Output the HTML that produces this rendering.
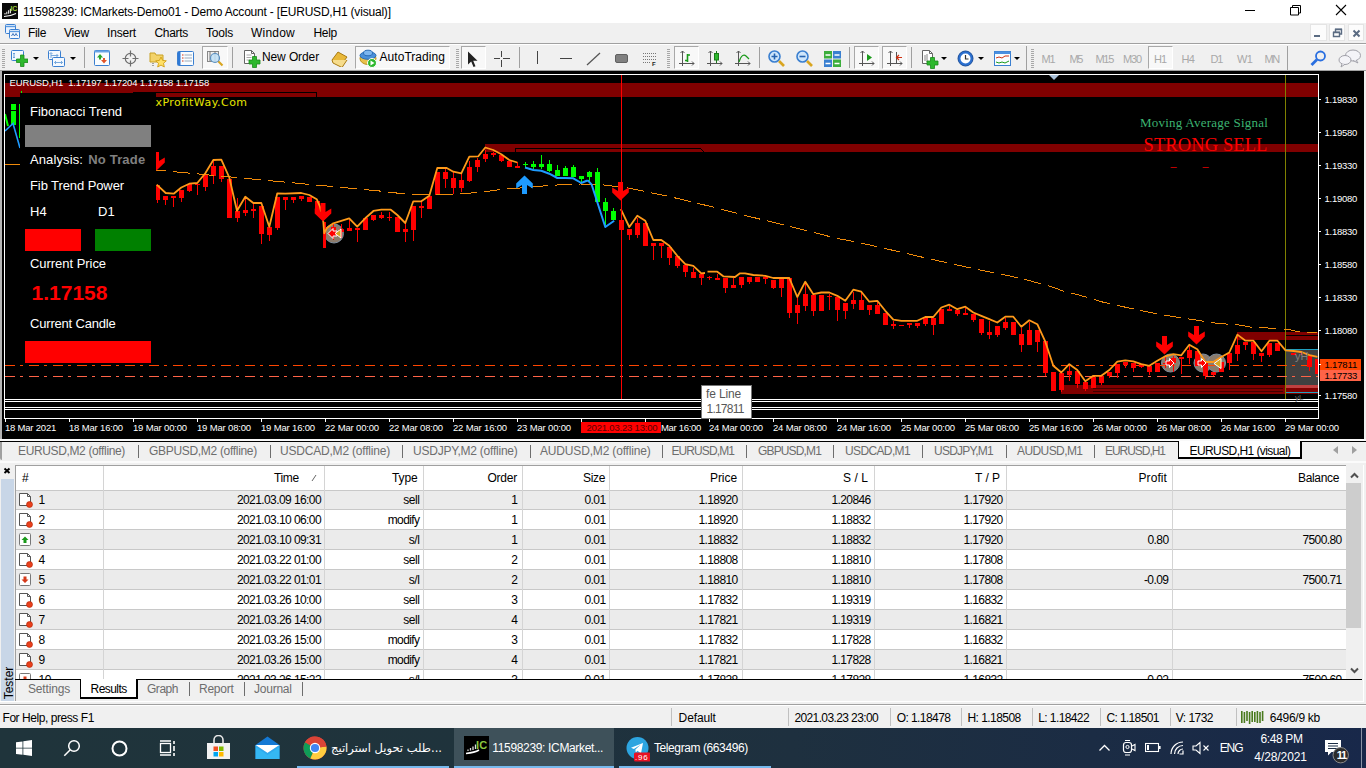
<!DOCTYPE html>
<html lang="en"><head><meta charset="utf-8"><title>11598239: ICMarkets-Demo01 - Demo Account - [EURUSD,H1 (visual)]</title>
<style>
html,body{margin:0;padding:0}
body{width:1366px;height:768px;overflow:hidden;position:relative;background:#f0f0f0;font-family:"Liberation Sans",sans-serif;font-size:12px;color:#000}
.t{position:absolute;white-space:pre;display:block}
.b{position:absolute;display:block}
svg{display:block}
</style></head><body>

<div class="b" style="left:0px;top:0px;width:1366px;height:23px;background:#fff;"></div>
<span class="t" style="left:23.0px;top:3.7px;font-size:12px;line-height:16px;color:#000;letter-spacing:-0.20px;">11598239: ICMarkets-Demo01 - Demo Account - [EURUSD,H1 (visual)]</span>
<div class="b" style="left:0px;top:23px;width:1366px;height:20px;background:#f0f0f0;"></div>
<div class="b" style="left:0px;top:43px;width:1366px;height:1px;background:#a0a0a0;"></div>
<div class="b" style="left:0px;top:44px;width:1366px;height:1px;background:#fff;"></div>
<span class="t" style="left:28.0px;top:24.8px;font-size:12px;line-height:16px;color:#000;letter-spacing:-0.33px;">File</span>
<span class="t" style="left:64.0px;top:24.8px;font-size:12px;line-height:16px;color:#000;letter-spacing:-0.20px;">View</span>
<span class="t" style="left:107.0px;top:24.8px;font-size:12px;line-height:16px;color:#000;letter-spacing:-0.17px;">Insert</span>
<span class="t" style="left:154.5px;top:24.8px;font-size:12px;line-height:16px;color:#000;letter-spacing:-0.31px;">Charts</span>
<span class="t" style="left:206.0px;top:24.8px;font-size:12px;line-height:16px;color:#000;letter-spacing:-0.20px;">Tools</span>
<span class="t" style="left:251.0px;top:24.8px;font-size:12px;line-height:16px;color:#000;letter-spacing:0.22px;">Window</span>
<span class="t" style="left:313.5px;top:24.8px;font-size:12px;line-height:16px;color:#000;letter-spacing:-0.30px;">Help</span>
<div class="b" style="left:0px;top:45px;width:1366px;height:25px;background:#f0f0f0;"></div>
<svg class="b" style="left:2px;top:3px" width="16" height="16" viewBox="0 0 16 16"><rect width="16" height="16" fill="#0a0a0a"/><path d="M2 13.500c4-0.300 8-1 12-3" stroke="#fff" stroke-width="1.200" fill="none"/><path d="M3 11.500v-1.500M4.800 11.200v-2.500M6.600 10.800v-3.500M8.400 10.300v-4.500" stroke="#e8e8e8" stroke-width="1.100"/></svg>
<span class="t" style="left:10.5px;top:4.4px;font-size:7px;line-height:9px;color:#9ccc3c;letter-spacing:-0.25px;font-weight:bold;">IC</span>
<svg class="b" style="left:1240px;top:0px" width="126" height="22" viewBox="0 0 126 22"><path d="M5 10.500h10" stroke="#000" stroke-width="1"/><path d="M50.500 7.500h8v7.500h-8zM52.500 7.500v-2h8v7.500h-2" stroke="#000" fill="none"/><path d="M96 5l10 10M106 5l-10 10" stroke="#000" stroke-width="1.100" fill="none"/></svg>
<div class="b" style="left:1310px;top:24px;width:16.5px;height:17px;background:#fcfcfc;border:1px solid #e4e4e4;box-sizing:border-box"></div>
<div class="b" style="left:1328.5px;top:24px;width:16.5px;height:17px;background:#fcfcfc;border:1px solid #e4e4e4;box-sizing:border-box"></div>
<div class="b" style="left:1347.5px;top:24px;width:16.5px;height:17px;background:#fcfcfc;border:1px solid #e4e4e4;box-sizing:border-box"></div>
<svg class="b" style="left:1310px;top:24px" width="56" height="18" viewBox="0 0 56 18"><path d="M4 12h6" stroke="#5a6b82" stroke-width="2"/><path d="M23.500 8.500h6v4h-6zM25.500 8v-2.500h6v4.500h-1.500" stroke="#5a6b82" stroke-width="1.400" fill="none"/><path d="M23 8.300h7M25 5.300h7" stroke="#5a6b82" stroke-width="1.600"/><path d="M43.500 6.500l6 6M49.500 6.500l-6 6" stroke="#5a6b82" stroke-width="2" fill="none"/></svg>
<svg class="b" style="left:5px;top:24px" width="16" height="16" viewBox="0 0 16 16"><rect x="0.500" y="0.500" width="10" height="9" rx="1" fill="#eaf3ff" stroke="#3a7fd0"/><path d="M0.500 2.500h10" stroke="#5b9be0" stroke-width="1.400"/><rect x="4.500" y="5.500" width="10" height="9" rx="1" fill="#f4f9ff" stroke="#3a7fd0"/><path d="M4.500 7.500h10" stroke="#5b9be0" stroke-width="1.400"/><path d="M6.500 12l1.500-2.500 1.500 2.500 1.500-2.500 1.500 2.500" stroke="#2a68b8" fill="none" stroke-width="0.900"/></svg>
<svg class="b" style="left:2px;top:49px" width="3" height="20" viewBox="0 0 3 20"><rect x="0" y="0" width="3" height="1" fill="#a8a8a8"/><rect x="0" y="2" width="3" height="1" fill="#a8a8a8"/><rect x="0" y="4" width="3" height="1" fill="#a8a8a8"/><rect x="0" y="6" width="3" height="1" fill="#a8a8a8"/><rect x="0" y="8" width="3" height="1" fill="#a8a8a8"/><rect x="0" y="10" width="3" height="1" fill="#a8a8a8"/><rect x="0" y="12" width="3" height="1" fill="#a8a8a8"/><rect x="0" y="14" width="3" height="1" fill="#a8a8a8"/><rect x="0" y="16" width="3" height="1" fill="#a8a8a8"/><rect x="0" y="18" width="3" height="1" fill="#a8a8a8"/></svg>
<svg class="b" style="left:11px;top:50px" width="17" height="18" viewBox="0 0 17 18"><rect x="0.500" y="0.500" width="12" height="10" rx="1" fill="#f4f9ff" stroke="#3a7fd0"/><path d="M3 3v5M2 4l1-1 1 1M2 7l1 1 1-1" stroke="#6a9fd8" fill="none"/><path d="M9.500 5h3.500v4h4v3.500h-4v4h-3.500v-4h-4v-3.500h4z" fill="#2db82d" stroke="#1a8a1a" stroke-width="0.800"/></svg>
<svg class="b" style="left:33px;top:57px" width="6" height="3" viewBox="0 0 6 3"><path d="M0 0h6l-3 3z" fill="#000"/></svg>
<svg class="b" style="left:48px;top:50px" width="18" height="18" viewBox="0 0 18 18"><rect x="0.500" y="0.500" width="12" height="9" rx="1" fill="#f4f9ff" stroke="#3a7fd0"/><rect x="4.500" y="7.500" width="12" height="9" rx="1" fill="#f4f9ff" stroke="#3a7fd0"/><path d="M3 5.500h7M6.500 12.500h8M3 3v5M4.500 4l-1.500-1.500-1.500 1.500M8.500 4l1.500 1.500-1.500 1.500M8 11l-1.500 1.500 1.500 1.500M13 11l1.500 1.500-1.500 1.500" stroke="#6a9fd8" fill="none" stroke-width="0.900"/></svg>
<svg class="b" style="left:70px;top:57px" width="6" height="3" viewBox="0 0 6 3"><path d="M0 0h6l-3 3z" fill="#000"/></svg>
<div class="b" style="left:84px;top:47px;width:1px;height:21px;background:#a0a0a0;"></div>
<svg class="b" style="left:94px;top:50px" width="17" height="17" viewBox="0 0 17 17"><rect x="0.500" y="0.500" width="15" height="15" rx="1" fill="#fafdff" stroke="#3a7fd0"/><rect x="0.500" y="0.500" width="15" height="2" fill="#6aa5e6"/><path d="M6 4l3 3.500h-2v2h-2v-2h-2z" fill="#2aa52a"/><path d="M10 13.500l3-3.500h-2v-2h-2v2h-2z" fill="#e2552a"/></svg>
<svg class="b" style="left:122px;top:50px" width="17" height="17" viewBox="0 0 17 17"><circle cx="8.500" cy="8.500" r="5.200" fill="none" stroke="#6e6e6e" stroke-width="1.200"/><path d="M8.500 0.500v6M8.500 10.500v6M0.500 8.500h6M10.500 8.500h6" stroke="#6e6e6e" stroke-width="1.200"/></svg>
<svg class="b" style="left:149px;top:50px" width="19" height="18" viewBox="0 0 19 18"><path d="M1 3h5l1 2h7v7h-13z" fill="#f3d36a" stroke="#c9a227"/><path d="M12 7l1.600 3.400 3.700 0.400-2.800 2.500 0.800 3.700-3.300-1.900-3.300 1.900 0.800-3.700-2.800-2.500 3.700-0.400z" fill="#ffe066" stroke="#d29f13" stroke-width="0.900"/><path d="M4 13v4" stroke="#555" stroke-dasharray="1 1"/></svg>
<svg class="b" style="left:177px;top:51px" width="18" height="16" viewBox="0 0 18 16"><rect x="0.500" y="0.500" width="16" height="14" rx="1" fill="#fafdff" stroke="#3a7fd0"/><rect x="1" y="1" width="2.500" height="13" fill="#2e79d6"/><path d="M7.500 4h7.500M7.500 7h7.500M7.500 10h7.500" stroke="#9ab"/><path d="M5 4h1.500M5 7h1.500M5 10h1.500" stroke="#d03010"/></svg>
<div class="b" style="left:202px;top:46px;width:26px;height:23px;background:#f8f8f8;border:1px solid #fff;border-top-color:#a8a8a8;border-left-color:#a8a8a8;box-sizing:border-box"></div>
<svg class="b" style="left:206px;top:50px" width="18" height="18" viewBox="0 0 18 18"><rect x="1.500" y="1.500" width="11" height="10" fill="#eee" stroke="#888"/><path d="M4 1v10M9 1v10" stroke="#777"/><circle cx="9" cy="8" r="4.500" fill="#bfe0f7" fill-opacity="0.850" stroke="#5a8fc0" stroke-width="1.200"/><path d="M12.500 11.500l4 4" stroke="#d9a520" stroke-width="2.200"/></svg>
<div class="b" style="left:232px;top:47px;width:1px;height:21px;background:#a0a0a0;"></div>
<svg class="b" style="left:243px;top:50px" width="18" height="18" viewBox="0 0 18 18"><path d="M1.500 0.500h7l3 3v10h-10z" fill="#fff" stroke="#666"/><path d="M8.500 0.500v3h3" fill="none" stroke="#666"/><path d="M3.500 5h5M3.500 7.500h5M3.500 10h3" stroke="#aaa"/><path d="M10 8h4v3.500h3.500v4h-3.500v3.500h-4v-3.500h-3.500v-4h3.500z" transform="translate(-0.5,-1.500)" fill="#2db82d" stroke="#1a8a1a" stroke-width="0.800"/></svg>
<span class="t" style="left:262.0px;top:49.1px;font-size:12px;line-height:16px;color:#000;letter-spacing:-0.11px;">New Order</span>
<svg class="b" style="left:331px;top:51px" width="17" height="16" viewBox="0 0 17 16"><path d="M1 9l6-8 9 5-6 8z" fill="#e8b83a" stroke="#a87a12"/><path d="M1 9l1 3 9 4.500 5-7.500" fill="#f6dc8c" stroke="#a87a12"/></svg>
<div class="b" style="left:355px;top:46px;width:95px;height:23px;background:#f8f8f8;border:1px solid #fff;border-top-color:#a8a8a8;border-left-color:#a8a8a8;box-sizing:border-box"></div>
<svg class="b" style="left:359px;top:49px" width="19" height="19" viewBox="0 0 19 19"><ellipse cx="9" cy="9.500" rx="8" ry="6" fill="#e9c24b" stroke="#b8901c"/><ellipse cx="9" cy="6.500" rx="8" ry="3.800" fill="#4a90d9" stroke="#2b6cb5"/><ellipse cx="9" cy="4" rx="4.500" ry="2.800" fill="#7db6ee" stroke="#2b6cb5"/><circle cx="13" cy="14" r="4.500" fill="#2db82d" stroke="#fff"/><path d="M11.500 11.500v5l4-2.500z" fill="#fff"/></svg>
<span class="t" style="left:379.5px;top:49.1px;font-size:12px;line-height:16px;color:#000;letter-spacing:0.05px;">AutoTrading</span>
<svg class="b" style="left:456px;top:49px" width="3" height="20" viewBox="0 0 3 20"><rect x="0" y="0" width="3" height="1" fill="#a8a8a8"/><rect x="0" y="2" width="3" height="1" fill="#a8a8a8"/><rect x="0" y="4" width="3" height="1" fill="#a8a8a8"/><rect x="0" y="6" width="3" height="1" fill="#a8a8a8"/><rect x="0" y="8" width="3" height="1" fill="#a8a8a8"/><rect x="0" y="10" width="3" height="1" fill="#a8a8a8"/><rect x="0" y="12" width="3" height="1" fill="#a8a8a8"/><rect x="0" y="14" width="3" height="1" fill="#a8a8a8"/><rect x="0" y="16" width="3" height="1" fill="#a8a8a8"/><rect x="0" y="18" width="3" height="1" fill="#a8a8a8"/></svg>
<div class="b" style="left:461px;top:46px;width:25px;height:23px;background:#f8f8f8;border:1px solid #fff;border-top-color:#a8a8a8;border-left-color:#a8a8a8;box-sizing:border-box"></div>
<svg class="b" style="left:467px;top:51px" width="12" height="17" viewBox="0 0 12 17"><path d="M1 0.500v13l3.200-3 2.300 5.500 2-0.800-2.300-5.400h4.300z" fill="#222"/></svg>
<svg class="b" style="left:494px;top:51px" width="16" height="16" viewBox="0 0 16 16"><path d="M7.500 0v16M0 7.500h16" stroke="#444" stroke-width="1"/><rect x="6" y="6" width="3" height="3" fill="#f0f0f0"/></svg>
<div class="b" style="left:519px;top:47px;width:1px;height:21px;background:#a0a0a0;"></div>
<div class="b" style="left:537px;top:51px;width:1px;height:13px;background:#444;"></div>
<div class="b" style="left:560px;top:58px;width:12px;height:1px;background:#444;"></div>
<svg class="b" style="left:586px;top:52px" width="15" height="14" viewBox="0 0 15 14"><path d="M1 13L14 1" stroke="#555" stroke-width="1.200"/></svg>
<div class="b" style="left:615px;top:54px;width:13px;height:9px;background:#808080;border-radius:2px;border:1px solid #606060;box-sizing:border-box"></div>
<svg class="b" style="left:642px;top:51px" width="16" height="16" viewBox="0 0 16 16"><path d="M1 2.500h13M1 5.500h13M1 8.500h13M1 11.500h8" stroke="#777" stroke-dasharray="1 1"/></svg>
<span class="t" style="left:652.0px;top:59.9px;font-size:6px;line-height:8px;color:#222;font-weight:bold;">F</span>
<svg class="b" style="left:667px;top:49px" width="3" height="20" viewBox="0 0 3 20"><rect x="0" y="0" width="3" height="1" fill="#a8a8a8"/><rect x="0" y="2" width="3" height="1" fill="#a8a8a8"/><rect x="0" y="4" width="3" height="1" fill="#a8a8a8"/><rect x="0" y="6" width="3" height="1" fill="#a8a8a8"/><rect x="0" y="8" width="3" height="1" fill="#a8a8a8"/><rect x="0" y="10" width="3" height="1" fill="#a8a8a8"/><rect x="0" y="12" width="3" height="1" fill="#a8a8a8"/><rect x="0" y="14" width="3" height="1" fill="#a8a8a8"/><rect x="0" y="16" width="3" height="1" fill="#a8a8a8"/><rect x="0" y="18" width="3" height="1" fill="#a8a8a8"/></svg>
<div class="b" style="left:674px;top:46px;width:25px;height:23px;background:#f8f8f8;border:1px solid #fff;border-top-color:#a8a8a8;border-left-color:#a8a8a8;box-sizing:border-box"></div>
<svg class="b" style="left:678px;top:50px" width="17" height="17" viewBox="0 0 17 17"><path d="M4.500 1v15M1 13.500h15M2.500 3l2-2 2 2M14 11.500l2 2-2 2" stroke="#555" fill="none"/><path d="M9.500 4v8M9.500 5h2.500M7 10.500h2.500" stroke="#1a9a1a" stroke-width="1.600" fill="none"/></svg>
<svg class="b" style="left:706px;top:50px" width="17" height="17" viewBox="0 0 17 17"><path d="M4.500 1v15M1 13.500h15M2.500 3l2-2 2 2M14 11.500l2 2-2 2" stroke="#555" fill="none"/><path d="M10.500 1v12" stroke="#1a7a1a"/><rect x="8.500" y="3.500" width="4" height="6.500" fill="#2db82d" stroke="#1a7a1a"/></svg>
<svg class="b" style="left:734px;top:50px" width="17" height="17" viewBox="0 0 17 17"><path d="M4.500 1v15M1 13.500h15M2.500 3l2-2 2 2M14 11.500l2 2-2 2" stroke="#555" fill="none"/><path d="M5 12c2-7 5-8 7-6l3 3" stroke="#1a9a1a" fill="none" stroke-width="1.200"/></svg>
<div class="b" style="left:759px;top:47px;width:1px;height:21px;background:#a0a0a0;"></div>
<svg class="b" style="left:768px;top:50px" width="17" height="18" viewBox="0 0 17 18"><circle cx="6.500" cy="6.500" r="5.500" fill="#cfe6fb" stroke="#3a7fd0" stroke-width="1.600"/><path d="M3.500 6.500h6M6.500 3.500v6" stroke="#2563b0" stroke-width="1.600"/><path d="M11 11l5 5" stroke="#d9a520" stroke-width="2.600"/></svg>
<svg class="b" style="left:796px;top:50px" width="17" height="18" viewBox="0 0 17 18"><circle cx="6.500" cy="6.500" r="5.500" fill="#cfe6fb" stroke="#3a7fd0" stroke-width="1.600"/><path d="M3.500 6.500h6" stroke="#2563b0" stroke-width="1.600"/><path d="M11 11l5 5" stroke="#d9a520" stroke-width="2.600"/></svg>
<svg class="b" style="left:824px;top:51px" width="17" height="16" viewBox="0 0 17 16"><rect x="0" y="0" width="8" height="7.500" fill="#3cae3c"/><rect x="9" y="0" width="8" height="7.500" fill="#3a7fd0"/><rect x="0" y="8.500" width="8" height="7.500" fill="#3a7fd0"/><rect x="9" y="8.500" width="8" height="7.500" fill="#3cae3c"/><path d="M1.500 4h5M10.500 4h5M1.500 12.500h5M10.500 12.500h5" stroke="#fff" stroke-width="1.600"/></svg>
<div class="b" style="left:849px;top:47px;width:1px;height:21px;background:#a0a0a0;"></div>
<div class="b" style="left:854px;top:46px;width:25px;height:23px;background:#f8f8f8;border:1px solid #fff;border-top-color:#a8a8a8;border-left-color:#a8a8a8;box-sizing:border-box"></div>
<svg class="b" style="left:858px;top:50px" width="17" height="17" viewBox="0 0 17 17"><path d="M4.500 1v15M1 13.500h15M2.500 3l2-2 2 2M14 11.500l2 2-2 2" stroke="#555" fill="none"/><path d="M9 4v7l5-3.500z" fill="#1a9a1a"/></svg>
<div class="b" style="left:882px;top:46px;width:25px;height:23px;background:#f8f8f8;border:1px solid #fff;border-top-color:#a8a8a8;border-left-color:#a8a8a8;box-sizing:border-box"></div>
<svg class="b" style="left:886px;top:50px" width="17" height="17" viewBox="0 0 17 17"><path d="M4.500 1v15M1 13.500h15M2.500 3l2-2 2 2M14 11.500l2 2-2 2" stroke="#555" fill="none"/><path d="M10.500 2v11" stroke="#555"/><path d="M16 7.500h-5M13 5l-2.500 2.500 2.500 2.500" stroke="#d03010" fill="none" stroke-width="1.200"/></svg>
<div class="b" style="left:911px;top:47px;width:1px;height:21px;background:#a0a0a0;"></div>
<svg class="b" style="left:921px;top:50px" width="18" height="19" viewBox="0 0 18 19"><path d="M1.500 0.500h7l3 3v10h-10z" fill="#fff" stroke="#666"/><path d="M8.500 0.500v3h3" fill="none" stroke="#666"/><path d="M4 5v6M6 4v8" stroke="#888"/><path d="M10 8h4v3.500h3.500v4h-3.500v3.500h-4v-3.500h-3.500v-4h3.500z" transform="translate(-0.5,-0.500)" fill="#2db82d" stroke="#1a8a1a" stroke-width="0.800"/></svg>
<svg class="b" style="left:941px;top:57px" width="6" height="3" viewBox="0 0 6 3"><path d="M0 0h6l-3 3z" fill="#000"/></svg>
<svg class="b" style="left:957px;top:50px" width="17" height="17" viewBox="0 0 17 17"><circle cx="8.500" cy="8.500" r="7.500" fill="#2a6fd0" stroke="#1b4e9a"/><circle cx="8.500" cy="8.500" r="5" fill="#fff"/><path d="M8.500 5v4h3" stroke="#333" fill="none" stroke-width="1.200"/></svg>
<svg class="b" style="left:978px;top:57px" width="6" height="3" viewBox="0 0 6 3"><path d="M0 0h6l-3 3z" fill="#000"/></svg>
<svg class="b" style="left:994px;top:51px" width="17" height="15" viewBox="0 0 17 15"><rect x="0.500" y="0.500" width="16" height="14" fill="#fafdff" stroke="#3a7fd0"/><rect x="0.500" y="0.500" width="16" height="2.500" fill="#4a8fe0"/><path d="M2 7l3-1 3 1 3-2 4 0" stroke="#d03010" fill="none"/><path d="M2 11l3 1 3-1 3 1 4-2" stroke="#1a9a1a" fill="none"/></svg>
<svg class="b" style="left:1014px;top:57px" width="6" height="3" viewBox="0 0 6 3"><path d="M0 0h6l-3 3z" fill="#000"/></svg>
<svg class="b" style="left:1031px;top:49px" width="3" height="20" viewBox="0 0 3 20"><rect x="0" y="0" width="3" height="1" fill="#a8a8a8"/><rect x="0" y="2" width="3" height="1" fill="#a8a8a8"/><rect x="0" y="4" width="3" height="1" fill="#a8a8a8"/><rect x="0" y="6" width="3" height="1" fill="#a8a8a8"/><rect x="0" y="8" width="3" height="1" fill="#a8a8a8"/><rect x="0" y="10" width="3" height="1" fill="#a8a8a8"/><rect x="0" y="12" width="3" height="1" fill="#a8a8a8"/><rect x="0" y="14" width="3" height="1" fill="#a8a8a8"/><rect x="0" y="16" width="3" height="1" fill="#a8a8a8"/><rect x="0" y="18" width="3" height="1" fill="#a8a8a8"/></svg>
<span class="t" style="left:1041.5px;top:51.5px;font-size:11px;line-height:14px;color:#a8a8a8;letter-spacing:-1.14px;">M1</span>
<span class="t" style="left:1069.5px;top:51.5px;font-size:11px;line-height:14px;color:#a8a8a8;letter-spacing:-1.39px;">M5</span>
<span class="t" style="left:1095.5px;top:51.5px;font-size:11px;line-height:14px;color:#a8a8a8;letter-spacing:-1.30px;">M15</span>
<span class="t" style="left:1123.0px;top:51.5px;font-size:11px;line-height:14px;color:#a8a8a8;letter-spacing:-1.13px;">M30</span>
<span class="t" style="left:1181.5px;top:51.5px;font-size:11px;line-height:14px;color:#a8a8a8;letter-spacing:-0.78px;">H4</span>
<span class="t" style="left:1210.5px;top:51.5px;font-size:11px;line-height:14px;color:#a8a8a8;letter-spacing:-1.28px;">D1</span>
<span class="t" style="left:1237.0px;top:51.5px;font-size:11px;line-height:14px;color:#a8a8a8;letter-spacing:-0.75px;">W1</span>
<span class="t" style="left:1264.5px;top:51.5px;font-size:11px;line-height:14px;color:#a8a8a8;letter-spacing:-1.30px;">MN</span>
<div class="b" style="left:1148px;top:46px;width:25px;height:23px;background:#f8f8f8;border:1px solid #fff;border-top-color:#a8a8a8;border-left-color:#a8a8a8;box-sizing:border-box"></div>
<span class="t" style="left:1154.0px;top:51.5px;font-size:11px;line-height:14px;color:#a8a8a8;letter-spacing:-1.03px;">H1</span>
<div class="b" style="left:1287px;top:46px;width:1px;height:24px;background:#a0a0a0;"></div>
<div class="b" style="left:1026px;top:46px;width:1px;height:24px;background:#a0a0a0;"></div>
<svg class="b" style="left:1310px;top:50px" width="17" height="17" viewBox="0 0 17 17"><circle cx="10.500" cy="6" r="4.500" fill="none" stroke="#2a6fe0" stroke-width="1.800"/><path d="M7 9.500l-5.500 5.500" stroke="#2a6fe0" stroke-width="2.800"/></svg>
<svg class="b" style="left:1338px;top:49px" width="24" height="19" viewBox="0 0 24 19"><ellipse cx="15" cy="6.500" rx="7.500" ry="5.500" fill="#f4f4f8" stroke="#a0a0a8"/><path d="M18 11l2 3-5-2.500" fill="#f4f4f8" stroke="#a0a0a8"/><ellipse cx="7" cy="11" rx="6" ry="4.500" fill="#f4f4f8" stroke="#a0a0a8"/><path d="M4 15l-1 3 4-2.800" fill="#f4f4f8" stroke="#a0a0a8"/></svg>
<svg class="chart" width="1366" height="768" viewBox="0 0 1366 768" style="position:absolute;left:0;top:0">
<rect x="0" y="70" width="1366" height="369" fill="#f0f0f0"/>
<rect x="0" y="70" width="1366" height="1" fill="#a0a0a0"/>
<rect x="2" y="71" width="1362" height="368" fill="#000"/>
<rect x="0" y="71" width="2" height="368" fill="#b4b4b4"/>
<g shape-rendering="crispEdges">
<rect x="5" y="83" width="1313" height="14" fill="#800000"/>
<path d="M132.5 92.5H316.5V96.5" fill="none" stroke="#000" stroke-width="1"/>
<rect x="485" y="144" width="833" height="8" fill="#800000"/>
<path d="M515.5 152V148.500H700.500L704 152" fill="none" stroke="#000" stroke-width="1"/>
<rect x="1237" y="332" width="81" height="8" fill="#800000"/>
<rect x="1285" y="335" width="33" height="1" fill="#000"/>
<rect x="1061" y="385" width="257" height="9" fill="#800000"/>
<rect x="1093" y="388" width="190" height="1" fill="#400000"/>
<rect x="1093" y="391" width="190" height="1" fill="#400000"/>
<rect x="1286" y="350" width="32" height="35" fill="#404040"/>
<rect x="1286" y="385" width="32" height="3" fill="#c04040"/>
<rect x="1286" y="349" width="32" height="1" fill="#20a0c0"/>
<rect x="1286" y="392" width="32" height="1" fill="#20a0c0"/>
<rect x="1285" y="75" width="1" height="324" fill="#808000"/>
</g>
<circle cx="1170.5" cy="363" r="9" fill="#8c7b6b" stroke="#7f8fa0" stroke-width="1"/>
<circle cx="1203" cy="363" r="9" fill="#8c7b6b" stroke="#7f8fa0" stroke-width="1"/>
<circle cx="1216.5" cy="363" r="9" fill="#8c7b6b" stroke="#7f8fa0" stroke-width="1"/>
<circle cx="334" cy="233.5" r="9.5" fill="#8c7b6b" stroke="#7f8fa0" stroke-width="1"/>
<g shape-rendering="crispEdges">
<line x1="5" y1="365.5" x2="1318" y2="365.5" stroke="#ff4500" stroke-width="1" stroke-dasharray="10 5 3 6"/>
<line x1="5" y1="376.5" x2="1318" y2="376.5" stroke="#ff6347" stroke-width="1" stroke-dasharray="10 5 3 6"/>
<rect x="157" y="185" width="1" height="18" fill="#ff0000"/>
<rect x="155" y="185" width="5" height="15" fill="#ff0000"/>
<rect x="165" y="196" width="1" height="9" fill="#ff0000"/>
<rect x="163" y="196" width="5" height="4" fill="#ff0000"/>
<rect x="173" y="196" width="1" height="11" fill="#ff0000"/>
<rect x="171" y="196" width="5" height="2" fill="#ff0000"/>
<rect x="181" y="190" width="1" height="12" fill="#ff0000"/>
<rect x="179" y="190" width="5" height="8" fill="#ff0000"/>
<rect x="189" y="184" width="1" height="8" fill="#ff0000"/>
<rect x="187" y="184" width="5" height="7" fill="#ff0000"/>
<rect x="197" y="184" width="1" height="11" fill="#ff0000"/>
<rect x="195" y="184" width="5" height="1" fill="#ff0000"/>
<rect x="205" y="175" width="1" height="16" fill="#ff0000"/>
<rect x="203" y="175" width="5" height="12" fill="#ff0000"/>
<rect x="213" y="161" width="1" height="23" fill="#ff0000"/>
<rect x="211" y="166" width="5" height="10" fill="#ff0000"/>
<rect x="221" y="166" width="1" height="16" fill="#ff0000"/>
<rect x="219" y="166" width="5" height="13" fill="#ff0000"/>
<rect x="229" y="179" width="1" height="39" fill="#ff0000"/>
<rect x="227" y="179" width="5" height="39" fill="#ff0000"/>
<rect x="237" y="198" width="1" height="24" fill="#ff0000"/>
<rect x="235" y="211" width="5" height="7" fill="#ff0000"/>
<rect x="245" y="198" width="1" height="18" fill="#ff0000"/>
<rect x="243" y="210" width="5" height="3" fill="#ff0000"/>
<rect x="253" y="203" width="1" height="15" fill="#ff0000"/>
<rect x="251" y="209" width="5" height="2" fill="#ff0000"/>
<rect x="261" y="206" width="1" height="38" fill="#ff0000"/>
<rect x="259" y="206" width="5" height="28" fill="#ff0000"/>
<rect x="269" y="227" width="1" height="14" fill="#ff0000"/>
<rect x="267" y="227" width="5" height="8" fill="#ff0000"/>
<rect x="277" y="197" width="1" height="33" fill="#ff0000"/>
<rect x="275" y="197" width="5" height="31" fill="#ff0000"/>
<rect x="285" y="197" width="1" height="13" fill="#ff0000"/>
<rect x="283" y="197" width="5" height="3" fill="#ff0000"/>
<rect x="293" y="197" width="1" height="6" fill="#ff0000"/>
<rect x="291" y="197" width="5" height="3" fill="#ff0000"/>
<rect x="301" y="196" width="1" height="5" fill="#ff0000"/>
<rect x="299" y="196" width="5" height="3" fill="#ff0000"/>
<rect x="309" y="197" width="1" height="5" fill="#ff0000"/>
<rect x="307" y="197" width="5" height="5" fill="#ff0000"/>
<rect x="317" y="201" width="1" height="12" fill="#ff0000"/>
<rect x="315" y="201" width="5" height="12" fill="#ff0000"/>
<rect x="325" y="222" width="1" height="26" fill="#ff0000"/>
<rect x="323" y="222" width="3" height="26" fill="#ff0000"/>
<rect x="333" y="224" width="1" height="16" fill="#ff0000"/>
<rect x="331" y="227" width="5" height="6" fill="#ff0000"/>
<rect x="341" y="224" width="1" height="14" fill="#ff0000"/>
<rect x="339" y="229" width="5" height="3" fill="#ff0000"/>
<rect x="349" y="220" width="1" height="11" fill="#ff0000"/>
<rect x="347" y="228" width="5" height="3" fill="#ff0000"/>
<rect x="357" y="228" width="1" height="14" fill="#ff0000"/>
<rect x="355" y="228" width="5" height="2" fill="#ff0000"/>
<rect x="365" y="218" width="1" height="12" fill="#ff0000"/>
<rect x="363" y="218" width="5" height="12" fill="#ff0000"/>
<rect x="373" y="215" width="1" height="6" fill="#ff0000"/>
<rect x="371" y="215" width="5" height="5" fill="#ff0000"/>
<rect x="381" y="212" width="1" height="7" fill="#ff0000"/>
<rect x="379" y="215" width="5" height="3" fill="#ff0000"/>
<rect x="389" y="212" width="1" height="9" fill="#ff0000"/>
<rect x="387" y="217" width="5" height="1" fill="#ff0000"/>
<rect x="397" y="217" width="1" height="15" fill="#ff0000"/>
<rect x="395" y="217" width="5" height="15" fill="#ff0000"/>
<rect x="405" y="223" width="1" height="19" fill="#ff0000"/>
<rect x="403" y="229" width="5" height="3" fill="#ff0000"/>
<rect x="413" y="206" width="1" height="35" fill="#ff0000"/>
<rect x="411" y="206" width="5" height="24" fill="#ff0000"/>
<rect x="421" y="202" width="1" height="16" fill="#ff0000"/>
<rect x="419" y="206" width="5" height="2" fill="#ff0000"/>
<rect x="429" y="196" width="1" height="13" fill="#ff0000"/>
<rect x="427" y="196" width="5" height="13" fill="#ff0000"/>
<rect x="437" y="172" width="1" height="23" fill="#ff0000"/>
<rect x="435" y="172" width="5" height="23" fill="#ff0000"/>
<rect x="445" y="169" width="1" height="19" fill="#ff0000"/>
<rect x="443" y="172" width="5" height="7" fill="#ff0000"/>
<rect x="453" y="172" width="1" height="22" fill="#ff0000"/>
<rect x="451" y="178" width="5" height="10" fill="#ff0000"/>
<rect x="461" y="174" width="1" height="18" fill="#ff0000"/>
<rect x="459" y="180" width="5" height="8" fill="#ff0000"/>
<rect x="469" y="161" width="1" height="21" fill="#ff0000"/>
<rect x="467" y="167" width="5" height="14" fill="#ff0000"/>
<rect x="477" y="158" width="1" height="14" fill="#ff0000"/>
<rect x="475" y="160" width="5" height="7" fill="#ff0000"/>
<rect x="485" y="150" width="1" height="12" fill="#ff0000"/>
<rect x="483" y="154" width="5" height="5" fill="#ff0000"/>
<rect x="493" y="152" width="1" height="5" fill="#ff0000"/>
<rect x="491" y="153" width="5" height="2" fill="#ff0000"/>
<rect x="501" y="155" width="1" height="7" fill="#ff0000"/>
<rect x="499" y="155" width="5" height="6" fill="#ff0000"/>
<rect x="509" y="161" width="1" height="6" fill="#ff0000"/>
<rect x="507" y="161" width="5" height="6" fill="#ff0000"/>
<rect x="517" y="162" width="1" height="6" fill="#ff0000"/>
<rect x="515" y="166" width="5" height="2" fill="#ff0000"/>
<rect x="525" y="162" width="1" height="6" fill="#00ff00"/>
<rect x="523" y="164" width="5" height="1" fill="#00ff00"/>
<rect x="533" y="161" width="1" height="8" fill="#00ff00"/>
<rect x="531" y="164" width="5" height="3" fill="#00ff00"/>
<rect x="541" y="155" width="1" height="14" fill="#00ff00"/>
<rect x="539" y="164" width="5" height="3" fill="#00ff00"/>
<rect x="549" y="160" width="1" height="12" fill="#00ff00"/>
<rect x="547" y="164" width="5" height="7" fill="#00ff00"/>
<rect x="557" y="165" width="1" height="11" fill="#00ff00"/>
<rect x="555" y="170" width="5" height="6" fill="#00ff00"/>
<rect x="565" y="166" width="1" height="10" fill="#00ff00"/>
<rect x="563" y="168" width="5" height="8" fill="#00ff00"/>
<rect x="573" y="165" width="1" height="12" fill="#00ff00"/>
<rect x="571" y="167" width="5" height="10" fill="#00ff00"/>
<rect x="581" y="176" width="1" height="6" fill="#00ff00"/>
<rect x="579" y="176" width="5" height="3" fill="#00ff00"/>
<rect x="589" y="171" width="1" height="10" fill="#00ff00"/>
<rect x="587" y="172" width="5" height="5" fill="#00ff00"/>
<rect x="597" y="168" width="1" height="34" fill="#00ff00"/>
<rect x="595" y="172" width="5" height="30" fill="#00ff00"/>
<rect x="605" y="198" width="1" height="27" fill="#00ff00"/>
<rect x="603" y="202" width="5" height="9" fill="#00ff00"/>
<rect x="613" y="208" width="1" height="12" fill="#00ff00"/>
<rect x="611" y="211" width="5" height="9" fill="#00ff00"/>
<rect x="621" y="220" width="1" height="10" fill="#ff0000"/>
<rect x="619" y="220" width="5" height="10" fill="#ff0000"/>
<rect x="629" y="229" width="1" height="11" fill="#ff0000"/>
<rect x="627" y="229" width="5" height="6" fill="#ff0000"/>
<rect x="637" y="218" width="1" height="20" fill="#ff0000"/>
<rect x="635" y="223" width="5" height="12" fill="#ff0000"/>
<rect x="645" y="223" width="1" height="23" fill="#ff0000"/>
<rect x="643" y="223" width="5" height="23" fill="#ff0000"/>
<rect x="653" y="243" width="1" height="17" fill="#ff0000"/>
<rect x="651" y="243" width="5" height="3" fill="#ff0000"/>
<rect x="661" y="243" width="1" height="15" fill="#ff0000"/>
<rect x="659" y="243" width="5" height="3" fill="#ff0000"/>
<rect x="669" y="247" width="1" height="18" fill="#ff0000"/>
<rect x="667" y="247" width="5" height="11" fill="#ff0000"/>
<rect x="677" y="256" width="1" height="12" fill="#ff0000"/>
<rect x="675" y="256" width="5" height="10" fill="#ff0000"/>
<rect x="685" y="265" width="1" height="12" fill="#ff0000"/>
<rect x="683" y="265" width="5" height="7" fill="#ff0000"/>
<rect x="693" y="268" width="1" height="10" fill="#ff0000"/>
<rect x="691" y="272" width="5" height="6" fill="#ff0000"/>
<rect x="701" y="274" width="1" height="11" fill="#ff0000"/>
<rect x="699" y="274" width="5" height="4" fill="#ff0000"/>
<rect x="709" y="276" width="1" height="4" fill="#ff0000"/>
<rect x="707" y="277" width="5" height="1" fill="#ff0000"/>
<rect x="717" y="274" width="1" height="6" fill="#ff0000"/>
<rect x="715" y="278" width="5" height="2" fill="#ff0000"/>
<rect x="725" y="278" width="1" height="15" fill="#ff0000"/>
<rect x="723" y="278" width="5" height="10" fill="#ff0000"/>
<rect x="733" y="278" width="1" height="10" fill="#ff0000"/>
<rect x="731" y="285" width="5" height="3" fill="#ff0000"/>
<rect x="741" y="277" width="1" height="11" fill="#ff0000"/>
<rect x="739" y="277" width="5" height="8" fill="#ff0000"/>
<rect x="749" y="277" width="1" height="7" fill="#ff0000"/>
<rect x="747" y="277" width="5" height="5" fill="#ff0000"/>
<rect x="757" y="277" width="1" height="5" fill="#ff0000"/>
<rect x="755" y="277" width="5" height="5" fill="#ff0000"/>
<rect x="765" y="277" width="1" height="7" fill="#ff0000"/>
<rect x="763" y="277" width="5" height="2" fill="#ff0000"/>
<rect x="773" y="280" width="1" height="9" fill="#ff0000"/>
<rect x="771" y="280" width="5" height="8" fill="#ff0000"/>
<rect x="781" y="279" width="1" height="18" fill="#ff0000"/>
<rect x="779" y="279" width="5" height="9" fill="#ff0000"/>
<rect x="789" y="278" width="1" height="40" fill="#ff0000"/>
<rect x="787" y="278" width="5" height="35" fill="#ff0000"/>
<rect x="797" y="298" width="1" height="26" fill="#ff0000"/>
<rect x="795" y="305" width="5" height="8" fill="#ff0000"/>
<rect x="805" y="282" width="1" height="29" fill="#ff0000"/>
<rect x="803" y="294" width="5" height="12" fill="#ff0000"/>
<rect x="813" y="295" width="1" height="21" fill="#ff0000"/>
<rect x="811" y="295" width="5" height="16" fill="#ff0000"/>
<rect x="821" y="295" width="1" height="16" fill="#ff0000"/>
<rect x="819" y="295" width="5" height="16" fill="#ff0000"/>
<rect x="829" y="294" width="1" height="16" fill="#ff0000"/>
<rect x="827" y="296" width="5" height="1" fill="#ff0000"/>
<rect x="837" y="297" width="1" height="24" fill="#ff0000"/>
<rect x="835" y="297" width="5" height="13" fill="#ff0000"/>
<rect x="845" y="303" width="1" height="16" fill="#ff0000"/>
<rect x="843" y="303" width="5" height="8" fill="#ff0000"/>
<rect x="853" y="292" width="1" height="17" fill="#ff0000"/>
<rect x="851" y="300" width="5" height="4" fill="#ff0000"/>
<rect x="861" y="293" width="1" height="17" fill="#ff0000"/>
<rect x="859" y="300" width="5" height="10" fill="#ff0000"/>
<rect x="869" y="305" width="1" height="10" fill="#ff0000"/>
<rect x="867" y="305" width="5" height="5" fill="#ff0000"/>
<rect x="877" y="302" width="1" height="12" fill="#ff0000"/>
<rect x="875" y="305" width="5" height="9" fill="#ff0000"/>
<rect x="885" y="313" width="1" height="12" fill="#ff0000"/>
<rect x="883" y="313" width="5" height="12" fill="#ff0000"/>
<rect x="893" y="321" width="1" height="8" fill="#ff0000"/>
<rect x="891" y="324" width="5" height="2" fill="#ff0000"/>
<rect x="901" y="325" width="1" height="1" fill="#ff0000"/>
<rect x="899" y="325" width="5" height="1" fill="#ff0000"/>
<rect x="909" y="323" width="1" height="5" fill="#ff0000"/>
<rect x="907" y="323" width="5" height="2" fill="#ff0000"/>
<rect x="917" y="323" width="1" height="5" fill="#ff0000"/>
<rect x="915" y="323" width="5" height="3" fill="#ff0000"/>
<rect x="925" y="318" width="1" height="8" fill="#ff0000"/>
<rect x="923" y="318" width="5" height="6" fill="#ff0000"/>
<rect x="933" y="318" width="1" height="17" fill="#ff0000"/>
<rect x="931" y="318" width="5" height="7" fill="#ff0000"/>
<rect x="941" y="309" width="1" height="15" fill="#ff0000"/>
<rect x="939" y="309" width="5" height="15" fill="#ff0000"/>
<rect x="949" y="306" width="1" height="5" fill="#ff0000"/>
<rect x="947" y="309" width="5" height="2" fill="#ff0000"/>
<rect x="957" y="310" width="1" height="6" fill="#ff0000"/>
<rect x="955" y="310" width="5" height="4" fill="#ff0000"/>
<rect x="965" y="308" width="1" height="7" fill="#ff0000"/>
<rect x="963" y="313" width="5" height="2" fill="#ff0000"/>
<rect x="973" y="314" width="1" height="8" fill="#ff0000"/>
<rect x="971" y="314" width="5" height="6" fill="#ff0000"/>
<rect x="981" y="319" width="1" height="16" fill="#ff0000"/>
<rect x="979" y="319" width="5" height="14" fill="#ff0000"/>
<rect x="989" y="321" width="1" height="18" fill="#ff0000"/>
<rect x="987" y="332" width="5" height="3" fill="#ff0000"/>
<rect x="997" y="326" width="1" height="11" fill="#ff0000"/>
<rect x="995" y="326" width="5" height="9" fill="#ff0000"/>
<rect x="1005" y="318" width="1" height="12" fill="#ff0000"/>
<rect x="1003" y="322" width="5" height="6" fill="#ff0000"/>
<rect x="1013" y="322" width="1" height="13" fill="#ff0000"/>
<rect x="1011" y="322" width="5" height="13" fill="#ff0000"/>
<rect x="1021" y="328" width="1" height="24" fill="#ff0000"/>
<rect x="1019" y="334" width="5" height="11" fill="#ff0000"/>
<rect x="1029" y="322" width="1" height="23" fill="#ff0000"/>
<rect x="1027" y="330" width="5" height="15" fill="#ff0000"/>
<rect x="1037" y="330" width="1" height="22" fill="#ff0000"/>
<rect x="1035" y="330" width="5" height="12" fill="#ff0000"/>
<rect x="1045" y="341" width="1" height="35" fill="#ff0000"/>
<rect x="1043" y="341" width="5" height="32" fill="#ff0000"/>
<rect x="1053" y="372" width="1" height="19" fill="#ff0000"/>
<rect x="1051" y="372" width="5" height="19" fill="#ff0000"/>
<rect x="1061" y="373" width="1" height="19" fill="#ff0000"/>
<rect x="1059" y="373" width="5" height="17" fill="#ff0000"/>
<rect x="1069" y="365" width="1" height="16" fill="#ff0000"/>
<rect x="1067" y="371" width="5" height="4" fill="#ff0000"/>
<rect x="1077" y="371" width="1" height="17" fill="#ff0000"/>
<rect x="1075" y="371" width="5" height="13" fill="#ff0000"/>
<rect x="1085" y="382" width="1" height="9" fill="#ff0000"/>
<rect x="1083" y="382" width="5" height="7" fill="#ff0000"/>
<rect x="1093" y="377" width="1" height="11" fill="#ff0000"/>
<rect x="1091" y="377" width="5" height="11" fill="#ff0000"/>
<rect x="1101" y="376" width="1" height="9" fill="#ff0000"/>
<rect x="1099" y="376" width="5" height="7" fill="#ff0000"/>
<rect x="1109" y="372" width="1" height="6" fill="#ff0000"/>
<rect x="1107" y="372" width="5" height="4" fill="#ff0000"/>
<rect x="1117" y="364" width="1" height="14" fill="#ff0000"/>
<rect x="1115" y="364" width="5" height="9" fill="#ff0000"/>
<rect x="1125" y="362" width="1" height="6" fill="#ff0000"/>
<rect x="1123" y="362" width="5" height="3" fill="#ff0000"/>
<rect x="1133" y="363" width="1" height="9" fill="#ff0000"/>
<rect x="1131" y="363" width="5" height="5" fill="#ff0000"/>
<rect x="1141" y="364" width="1" height="4" fill="#ff0000"/>
<rect x="1139" y="364" width="5" height="3" fill="#ff0000"/>
<rect x="1149" y="366" width="1" height="9" fill="#ff0000"/>
<rect x="1147" y="366" width="5" height="6" fill="#ff0000"/>
<rect x="1157" y="363" width="1" height="9" fill="#ff0000"/>
<rect x="1155" y="363" width="5" height="9" fill="#ff0000"/>
<rect x="1165" y="357" width="1" height="11" fill="#ff0000"/>
<rect x="1163" y="363" width="5" height="1" fill="#ff0000"/>
<rect x="1173" y="356" width="1" height="16" fill="#ff0000"/>
<rect x="1171" y="358" width="5" height="5" fill="#ff0000"/>
<rect x="1181" y="357" width="1" height="17" fill="#ff0000"/>
<rect x="1179" y="357" width="5" height="2" fill="#ff0000"/>
<rect x="1189" y="346" width="1" height="18" fill="#ff0000"/>
<rect x="1187" y="350" width="5" height="8" fill="#ff0000"/>
<rect x="1197" y="351" width="1" height="15" fill="#ff0000"/>
<rect x="1195" y="351" width="5" height="15" fill="#ff0000"/>
<rect x="1205" y="362" width="1" height="17" fill="#ff0000"/>
<rect x="1203" y="362" width="5" height="14" fill="#ff0000"/>
<rect x="1213" y="372" width="1" height="4" fill="#ff0000"/>
<rect x="1211" y="372" width="5" height="3" fill="#ff0000"/>
<rect x="1221" y="362" width="1" height="10" fill="#ff0000"/>
<rect x="1219" y="362" width="5" height="10" fill="#ff0000"/>
<rect x="1229" y="353" width="1" height="17" fill="#ff0000"/>
<rect x="1227" y="353" width="5" height="10" fill="#ff0000"/>
<rect x="1237" y="335" width="1" height="26" fill="#ff0000"/>
<rect x="1235" y="345" width="5" height="9" fill="#ff0000"/>
<rect x="1245" y="342" width="1" height="8" fill="#ff0000"/>
<rect x="1243" y="342" width="5" height="3" fill="#ff0000"/>
<rect x="1253" y="342" width="1" height="18" fill="#ff0000"/>
<rect x="1251" y="342" width="5" height="12" fill="#ff0000"/>
<rect x="1261" y="353" width="1" height="9" fill="#ff0000"/>
<rect x="1259" y="353" width="5" height="3" fill="#ff0000"/>
<rect x="1269" y="343" width="1" height="14" fill="#ff0000"/>
<rect x="1267" y="343" width="5" height="12" fill="#ff0000"/>
<rect x="1277" y="343" width="1" height="8" fill="#ff0000"/>
<rect x="1275" y="343" width="5" height="8" fill="#ff0000"/>
<rect x="1293" y="353" width="1" height="2" fill="#ff0000"/>
<rect x="1291" y="353" width="5" height="2" fill="#ff0000"/>
<rect x="1301" y="351" width="1" height="4" fill="#ff0000"/>
<rect x="1299" y="352" width="5" height="1" fill="#ff0000"/>
<rect x="1309" y="356" width="1" height="15" fill="#ff0000"/>
<rect x="1307" y="356" width="5" height="11" fill="#ff0000"/>
<rect x="1317" y="359" width="1" height="15" fill="#ff0000"/>
<rect x="1315" y="359" width="3" height="15" fill="#ff0000"/>
<rect x="11" y="104" width="5" height="21" fill="#00ff00"/>
<rect x="11" y="110" width="5" height="1" fill="#000"/>
<rect x="19" y="104" width="1" height="34" fill="#00ff00"/>
<rect x="21" y="91" width="1" height="2" fill="#00ff00"/>
</g>
<polyline points="5,131 13,123.5 20,148" fill="none" stroke="#1e9bff" stroke-width="1.6"/>
<polyline points="5,114 8,126" fill="none" stroke="#00ff00" stroke-width="2"/>
<polyline points="5.0,165.0 20.0,164.0 156.0,170.0 377.7,190.8 406.7,194.2 436.7,194.2 453.3,194.2 478.3,192.5 503.3,189.2 526.7,187.5 550.0,185.3 575.0,184.2 580.0,184.0 600.0,184.5 630.0,188.3 670.0,196.7 684.0,200.0 718.0,208.3 742.0,214.7 766.0,220.6 790.0,226.5 814.0,232.5 838.0,238.7 848.0,240.3 870.0,245.0 900.0,252.0 930.0,259.0 955.0,264.5 980.0,270.0 1006.7,275.3 1030.0,280.8 1054.0,287.5 1062.0,290.8 1079.0,295.0 1102.5,302.0 1126.7,307.5 1150.0,312.5 1174.0,316.7 1198.0,320.3 1216.7,323.3 1241.0,325.2 1253.0,327.6 1264.6,327.8 1288.0,329.3 1294.0,330.9 1307.0,332.3 1317.5,332.5" fill="none" stroke="#f08a0a" stroke-width="1" stroke-dasharray="17 7" shape-rendering="crispEdges"/>
<polyline points="156.7,184.7 165.7,193.0 173.7,193.7 181.3,187.5 189.3,183.7 197.3,183.0 205.3,173.3 213.3,160.0 221.3,159.7 229.3,177.5 233.3,195.0 237.0,210.8 245.3,196.7 253.3,203.0 261.3,203.0 269.3,226.7 277.3,193.3 285.3,193.7 301.3,193.0 309.3,195.0 316.7,199.2 320.0,206.7 323.3,221.7 324.2,233.3 326.7,228.3 333.3,223.3 349.2,218.3 357.2,226.7 365.2,218.3 373.2,211.3 373.3,210.8 381.3,209.7 390.8,209.7 397.3,215.0 405.3,223.0 413.3,201.3 421.3,201.3 429.3,195.8 437.3,168.0 446.7,168.0 453.3,171.7 461.3,173.3 469.3,156.7 478.3,156.3 485.3,147.5 493.3,150.0 501.3,154.2 509.3,160.0 517.3,162.5" fill="none" stroke="#ff9a1a" stroke-width="1.800" stroke-linejoin="round"/>
<polyline points="620.8,209.2 629.3,227.0 637.3,215.8 645.3,220.8 653.3,240.0 661.3,240.0 669.3,245.8 677.3,255.8 685.3,264.2 693.3,265.8 701.3,273.3 705.0,273.0" fill="none" stroke="#ff9a1a" stroke-width="1.800" stroke-linejoin="round"/>
<polyline points="707.5,271.7 717.3,271.7 723.3,276.3 735.0,277.0 740.0,273.3 745.0,273.3 753.3,275.0 765.3,275.8 773.3,278.0 789.3,278.0 797.3,297.0 805.3,281.7 813.3,294.2 821.3,292.5 829.3,292.5 837.3,295.8 845.3,300.8 853.3,289.7 861.3,291.7 869.3,301.7 877.3,300.8 885.3,310.8 893.3,319.7 898.3,320.3 901.3,320.8 917.3,320.8 925.3,317.0 933.3,317.0 941.3,307.5 949.3,304.7 957.3,309.2 965.3,306.7 973.3,312.5 981.3,315.8 989.3,319.2 997.3,322.5 1005.3,316.7 1013.3,316.7 1021.3,326.7 1029.3,320.3 1037.3,324.2 1045.3,341.7 1053.3,365.8 1061.3,372.5 1069.3,364.2 1077.3,370.0 1085.3,381.3 1093.3,375.8 1101.3,375.8 1109.3,370.0 1117.3,361.7 1125.3,360.3 1133.3,361.3 1141.3,364.2 1149.3,365.8 1157.3,360.8 1165.3,356.3 1173.3,354.2 1181.3,355.3 1189.3,344.7 1197.3,349.2 1205.3,362.0 1213.3,362.0 1221.3,357.0 1229.3,352.5 1237.4,334.6 1245.5,340.7 1253.5,340.7 1261.5,351.3 1269.4,340.7 1277.5,340.7 1285.5,350.4 1293.5,351.0 1301.5,352.0 1309.5,355.1 1317.5,356.9" fill="none" stroke="#ff9a1a" stroke-width="1.800" stroke-linejoin="round"/>
<polyline points="525.0,167.5 533.3,170.0 541.3,170.8 549.3,173.7 557.3,178.0 565.3,178.0 573.3,178.3 581.3,183.0 586.7,180.8 588.3,180.8 591.7,184.7 605.3,227.0 614.2,220.8" fill="none" stroke="#1e9bff" stroke-width="2" stroke-linejoin="round"/>
<polygon points="154.0,152.0 159.0,152.0 159.0,161.0 164.8,157.5 164.8,162.5 156.5,170.5 148.2,162.5 148.2,157.5 154.0,161.0" fill="#ff0000"/>
<polygon points="320.5,203.0 325.5,203.0 325.5,212.0 331.3,208.5 331.3,213.5 323.0,221.5 314.7,213.5 314.7,208.5 320.5,212.0" fill="#ff0000"/>
<polygon points="618.0,182.0 623.0,182.0 623.0,191.0 628.8,187.5 628.8,192.5 620.5,200.5 612.2,192.5 612.2,187.5 618.0,191.0" fill="#ff0000"/>
<polygon points="1162.0,336.0 1167.0,336.0 1167.0,345.0 1172.8,341.5 1172.8,346.5 1164.5,354.5 1156.2,346.5 1156.2,341.5 1162.0,345.0" fill="#ff0000"/>
<polygon points="1194.0,326.0 1199.0,326.0 1199.0,335.0 1204.8,331.5 1204.8,336.5 1196.5,344.5 1188.2,336.5 1188.2,331.5 1194.0,335.0" fill="#ff0000"/>
<polygon points="522.0,194.0 527.0,194.0 527.0,185.0 532.8,188.5 532.8,183.5 524.5,175.5 516.2,183.5 516.2,188.5 522.0,185.0" fill="#1e9bff"/>
<path d="M1166 361h3.500v-2.500l4.500 4.500-4.500 4.500v-2.500h-3.500z" fill="#ff0000" stroke="#fff" stroke-width="1"/>
<path d="M1198 361h3.500v-2.500l4.500 4.500-4.500 4.500v-2.500h-3.500z" fill="#ff0000" stroke="#fff" stroke-width="1"/>
<path d="M1221 358.500v10l-7-5z" fill="#d9a520" stroke="#fff" stroke-width="1"/>
<path d="M328 231h4v-2.500l5 5-5 5v-2.500h-4z" fill="#ff0000" stroke="#fff" stroke-width="1" transform="rotate(180 332.5 233.5)"/>
<path d="M341 229v9l-6-4.500z" fill="#d9a520" stroke="#fff" stroke-width="1"/>
<path d="M1049 75h10l-5 5z" fill="#a8c0d8"/>
<rect x="621" y="75" width="1" height="324" fill="#ff0000" shape-rendering="crispEdges"/>
<rect x="20" y="93" width="136" height="271" fill="#000"/>
<g shape-rendering="crispEdges">
<rect x="25" y="125" width="126" height="22" fill="#808080"/>
<rect x="25" y="229" width="56" height="22" fill="#ff0000"/>
<rect x="95" y="229" width="56" height="22" fill="#008000"/>
<rect x="25" y="341" width="126" height="22" fill="#ff0000"/>
<rect x="4" y="74" width="1315" height="1" fill="#fff"/>
<rect x="4" y="74" width="1" height="345" fill="#fff"/>
<rect x="1318" y="74" width="1" height="345" fill="#fff"/>
<rect x="4" y="399" width="1315" height="1" fill="#fff"/>
<rect x="4" y="401" width="1315" height="1" fill="#fff"/>
<rect x="4" y="407" width="1315" height="1" fill="#fff"/>
<rect x="4" y="409" width="1315" height="1" fill="#fff"/>
<rect x="4" y="418" width="1315" height="1" fill="#fff"/>
<rect x="5" y="400" width="1313" height="1" fill="#000"/>
<rect x="5" y="408" width="1313" height="1" fill="#000"/>
<rect x="5" y="419" width="1" height="3" fill="#fff"/>
<rect x="69" y="419" width="1" height="3" fill="#fff"/>
<rect x="133" y="419" width="1" height="3" fill="#fff"/>
<rect x="197" y="419" width="1" height="3" fill="#fff"/>
<rect x="261" y="419" width="1" height="3" fill="#fff"/>
<rect x="325" y="419" width="1" height="3" fill="#fff"/>
<rect x="389" y="419" width="1" height="3" fill="#fff"/>
<rect x="453" y="419" width="1" height="3" fill="#fff"/>
<rect x="517" y="419" width="1" height="3" fill="#fff"/>
<rect x="581" y="419" width="1" height="3" fill="#fff"/>
<rect x="645" y="419" width="1" height="3" fill="#fff"/>
<rect x="709" y="419" width="1" height="3" fill="#fff"/>
<rect x="773" y="419" width="1" height="3" fill="#fff"/>
<rect x="837" y="419" width="1" height="3" fill="#fff"/>
<rect x="901" y="419" width="1" height="3" fill="#fff"/>
<rect x="965" y="419" width="1" height="3" fill="#fff"/>
<rect x="1029" y="419" width="1" height="3" fill="#fff"/>
<rect x="1093" y="419" width="1" height="3" fill="#fff"/>
<rect x="1157" y="419" width="1" height="3" fill="#fff"/>
<rect x="1221" y="419" width="1" height="3" fill="#fff"/>
<rect x="1285" y="419" width="1" height="3" fill="#fff"/>
<rect x="1319" y="99" width="2" height="1" fill="#fff"/>
<rect x="1319" y="132" width="2" height="1" fill="#fff"/>
<rect x="1319" y="165" width="2" height="1" fill="#fff"/>
<rect x="1319" y="198" width="2" height="1" fill="#fff"/>
<rect x="1319" y="231" width="2" height="1" fill="#fff"/>
<rect x="1319" y="264" width="2" height="1" fill="#fff"/>
<rect x="1319" y="297" width="2" height="1" fill="#fff"/>
<rect x="1319" y="330" width="2" height="1" fill="#fff"/>
<rect x="1319" y="395" width="2" height="1" fill="#fff"/>
<rect x="1320" y="359" width="41" height="11" fill="#ff4500"/>
<rect x="1320" y="370" width="41" height="11" fill="#ff6347"/>
<rect x="1319" y="364" width="2" height="1" fill="#fff"/>
<rect x="581" y="422" width="80" height="11" fill="#ff0000"/>
</g>
</svg>
<span class="t" style="left:9.5px;top:76.7px;font-size:9.5px;line-height:12px;color:#fff;letter-spacing:-0.14px;">EURUSD,H1  1.17197 1.17204 1.17158 1.17158</span>
<span class="t" style="left:155.5px;top:96.0px;font-size:11px;line-height:14px;color:#e6e600;letter-spacing:0.45px;font-family:'DejaVu Sans','Liberation Sans',sans-serif;">xProfitWay.Com</span>
<span class="t" style="left:30.0px;top:102.8px;font-size:13px;line-height:17px;color:#fff;letter-spacing:-0.03px;">Fibonacci Trend</span>
<span class="t" style="left:30.0px;top:150.5px;font-size:13px;line-height:17px;color:#fff;letter-spacing:0.11px;">Analysis:</span>
<span class="t" style="left:88.3px;top:150.5px;font-size:13px;line-height:17px;color:#808080;letter-spacing:0.17px;font-weight:bold;">No Trade</span>
<span class="t" style="left:30.0px;top:176.5px;font-size:13px;line-height:17px;color:#fff;letter-spacing:-0.09px;">Fib Trend Power</span>
<span class="t" style="left:30.0px;top:202.8px;font-size:13px;line-height:17px;color:#fff;">H4</span>
<span class="t" style="left:98.0px;top:202.8px;font-size:13px;line-height:17px;color:#fff;">D1</span>
<span class="t" style="left:30.0px;top:254.5px;font-size:13px;line-height:17px;color:#fff;letter-spacing:-0.04px;">Current Price</span>
<span class="t" style="left:31.5px;top:278.9px;font-size:21px;line-height:27px;color:#ff0000;letter-spacing:0.01px;font-weight:bold;">1.17158</span>
<span class="t" style="left:30.0px;top:314.5px;font-size:13px;line-height:17px;color:#fff;letter-spacing:-0.19px;">Current Candle</span>
<span class="t" style="left:1140.0px;top:114.1px;font-size:13px;line-height:17px;color:#3cb371;letter-spacing:0.23px;font-family:'Liberation Serif',serif;">Moving Average Signal</span>
<span class="t" style="left:1143.5px;top:132.5px;font-size:18.5px;line-height:24px;color:#ff0000;letter-spacing:0.11px;font-family:'Liberation Serif',serif;">STRONG SELL</span>
<span class="t" style="left:1170.5px;top:157.9px;font-size:12px;line-height:16px;color:#ff0000;font-family:'Liberation Serif',serif;">–</span>
<span class="t" style="left:1202.5px;top:157.9px;font-size:12px;line-height:16px;color:#ff0000;font-family:'Liberation Serif',serif;">–</span>
<span class="t" style="left:1324.5px;top:93.9px;font-size:9.5px;line-height:12px;color:#fff;letter-spacing:-0.26px;">1.19830</span>
<span class="t" style="left:1324.5px;top:126.8px;font-size:9.5px;line-height:12px;color:#fff;letter-spacing:-0.26px;">1.19580</span>
<span class="t" style="left:1324.5px;top:159.8px;font-size:9.5px;line-height:12px;color:#fff;letter-spacing:-0.26px;">1.19330</span>
<span class="t" style="left:1324.5px;top:192.7px;font-size:9.5px;line-height:12px;color:#fff;letter-spacing:-0.26px;">1.19080</span>
<span class="t" style="left:1324.5px;top:225.7px;font-size:9.5px;line-height:12px;color:#fff;letter-spacing:-0.26px;">1.18830</span>
<span class="t" style="left:1324.5px;top:258.6px;font-size:9.5px;line-height:12px;color:#fff;letter-spacing:-0.26px;">1.18580</span>
<span class="t" style="left:1324.5px;top:291.5px;font-size:9.5px;line-height:12px;color:#fff;letter-spacing:-0.26px;">1.18330</span>
<span class="t" style="left:1324.5px;top:324.5px;font-size:9.5px;line-height:12px;color:#fff;letter-spacing:-0.26px;">1.18080</span>
<span class="t" style="left:1324.5px;top:390.4px;font-size:9.5px;line-height:12px;color:#fff;letter-spacing:-0.26px;">1.17580</span>
<span class="t" style="left:1324.5px;top:359.0px;font-size:9.5px;line-height:12px;color:#000;letter-spacing:-0.16px;">1.17811</span>
<span class="t" style="left:1324.5px;top:370.0px;font-size:9.5px;line-height:12px;color:#000;letter-spacing:-0.26px;">1.17733</span>
<span class="t" style="left:1295.0px;top:349.2px;font-size:11px;line-height:14px;color:#808080;">yH</span>
<span class="t" style="left:1295.0px;top:393.2px;font-size:8px;line-height:10px;color:#606060;">yL</span>
<span class="t" style="left:5.0px;top:421.5px;font-size:9.5px;line-height:12px;color:#fff;letter-spacing:-0.21px;">18 Mar 2021</span>
<span class="t" style="left:69.0px;top:421.5px;font-size:9.5px;line-height:12px;color:#fff;letter-spacing:-0.17px;">18 Mar 16:00</span>
<span class="t" style="left:133.0px;top:421.5px;font-size:9.5px;line-height:12px;color:#fff;letter-spacing:-0.17px;">19 Mar 00:00</span>
<span class="t" style="left:197.0px;top:421.5px;font-size:9.5px;line-height:12px;color:#fff;letter-spacing:-0.17px;">19 Mar 08:00</span>
<span class="t" style="left:261.0px;top:421.5px;font-size:9.5px;line-height:12px;color:#fff;letter-spacing:-0.17px;">19 Mar 16:00</span>
<span class="t" style="left:325.0px;top:421.5px;font-size:9.5px;line-height:12px;color:#fff;letter-spacing:-0.17px;">22 Mar 00:00</span>
<span class="t" style="left:389.0px;top:421.5px;font-size:9.5px;line-height:12px;color:#fff;letter-spacing:-0.17px;">22 Mar 08:00</span>
<span class="t" style="left:453.0px;top:421.5px;font-size:9.5px;line-height:12px;color:#fff;letter-spacing:-0.17px;">22 Mar 16:00</span>
<span class="t" style="left:517.0px;top:421.5px;font-size:9.5px;line-height:12px;color:#fff;letter-spacing:-0.17px;">23 Mar 00:00</span>
<span class="t" style="left:661.0px;top:421.5px;font-size:9.5px;line-height:12px;color:#fff;letter-spacing:-0.31px;">Mar 16:00</span>
<span class="t" style="left:709.0px;top:421.5px;font-size:9.5px;line-height:12px;color:#fff;letter-spacing:-0.17px;">24 Mar 00:00</span>
<span class="t" style="left:773.0px;top:421.5px;font-size:9.5px;line-height:12px;color:#fff;letter-spacing:-0.17px;">24 Mar 08:00</span>
<span class="t" style="left:837.0px;top:421.5px;font-size:9.5px;line-height:12px;color:#fff;letter-spacing:-0.17px;">24 Mar 16:00</span>
<span class="t" style="left:901.0px;top:421.5px;font-size:9.5px;line-height:12px;color:#fff;letter-spacing:-0.17px;">25 Mar 00:00</span>
<span class="t" style="left:965.0px;top:421.5px;font-size:9.5px;line-height:12px;color:#fff;letter-spacing:-0.17px;">25 Mar 08:00</span>
<span class="t" style="left:1029.0px;top:421.5px;font-size:9.5px;line-height:12px;color:#fff;letter-spacing:-0.17px;">25 Mar 16:00</span>
<span class="t" style="left:1093.0px;top:421.5px;font-size:9.5px;line-height:12px;color:#fff;letter-spacing:-0.17px;">26 Mar 00:00</span>
<span class="t" style="left:1157.0px;top:421.5px;font-size:9.5px;line-height:12px;color:#fff;letter-spacing:-0.17px;">26 Mar 08:00</span>
<span class="t" style="left:1221.0px;top:421.5px;font-size:9.5px;line-height:12px;color:#fff;letter-spacing:-0.17px;">26 Mar 16:00</span>
<span class="t" style="left:1285.0px;top:421.5px;font-size:9.5px;line-height:12px;color:#fff;letter-spacing:-0.17px;">29 Mar 00:00</span>
<span class="t" style="left:586.5px;top:421.5px;font-size:9.5px;line-height:12px;color:#5a0000;letter-spacing:-0.19px;">2021.03.23 13:00</span>
<div class="b" style="left:701px;top:385px;width:49px;height:32px;background:#fff;border:1px solid #767676"></div>
<span class="t" style="left:706.0px;top:386.3px;font-size:12px;line-height:16px;color:#575757;letter-spacing:-0.15px;">fe Line</span>
<span class="t" style="left:706.5px;top:401.1px;font-size:12px;line-height:16px;color:#575757;letter-spacing:-0.78px;">1.17811</span>
<div class="b" style="left:0px;top:439px;width:1366px;height:2px;background:#f9f9f9;"></div>
<div class="b" style="left:0px;top:441px;width:1366px;height:1px;background:#000;"></div>
<div class="b" style="left:0px;top:442px;width:1366px;height:23px;background:#f0f0f0;"></div>
<div class="b" style="left:0px;top:461px;width:1366px;height:2px;background:#fbfbfb;"></div>
<div class="b" style="left:0px;top:442px;width:2px;height:18px;background:#a0a0a0;border-radius:0 0 0 2px"></div>
<span class="t" style="left:18.0px;top:442.8px;font-size:12px;line-height:16px;color:#6d6d6d;letter-spacing:-0.36px;">EURUSD,M2 (offline)</span>
<span class="t" style="left:149.0px;top:442.8px;font-size:12px;line-height:16px;color:#6d6d6d;letter-spacing:-0.31px;">GBPUSD,M2 (offline)</span>
<span class="t" style="left:280.0px;top:442.8px;font-size:12px;line-height:16px;color:#6d6d6d;letter-spacing:-0.20px;">USDCAD,M2 (offline)</span>
<span class="t" style="left:413.0px;top:442.8px;font-size:12px;line-height:16px;color:#6d6d6d;letter-spacing:-0.23px;">USDJPY,M2 (offline)</span>
<span class="t" style="left:540.0px;top:442.8px;font-size:12px;line-height:16px;color:#6d6d6d;letter-spacing:-0.17px;">AUDUSD,M2 (offline)</span>
<span class="t" style="left:671.5px;top:442.8px;font-size:12px;line-height:16px;color:#6d6d6d;letter-spacing:-0.91px;">EURUSD,M1</span>
<span class="t" style="left:758.0px;top:442.8px;font-size:12px;line-height:16px;color:#6d6d6d;letter-spacing:-0.85px;">GBPUSD,M1</span>
<span class="t" style="left:845.0px;top:442.8px;font-size:12px;line-height:16px;color:#6d6d6d;letter-spacing:-0.63px;">USDCAD,M1</span>
<span class="t" style="left:934.0px;top:442.8px;font-size:12px;line-height:16px;color:#6d6d6d;letter-spacing:-0.76px;">USDJPY,M1</span>
<span class="t" style="left:1017.0px;top:442.8px;font-size:12px;line-height:16px;color:#6d6d6d;letter-spacing:-0.58px;">AUDUSD,M1</span>
<span class="t" style="left:1105.0px;top:442.8px;font-size:12px;line-height:16px;color:#6d6d6d;letter-spacing:-1.04px;">EURUSD,H1</span>
<div class="b" style="left:138px;top:445px;width:1px;height:13px;background:#6d6d6d;"></div>
<div class="b" style="left:270px;top:445px;width:1px;height:13px;background:#6d6d6d;"></div>
<div class="b" style="left:402px;top:445px;width:1px;height:13px;background:#6d6d6d;"></div>
<div class="b" style="left:530px;top:445px;width:1px;height:13px;background:#6d6d6d;"></div>
<div class="b" style="left:662px;top:445px;width:1px;height:13px;background:#6d6d6d;"></div>
<div class="b" style="left:746px;top:445px;width:1px;height:13px;background:#6d6d6d;"></div>
<div class="b" style="left:833px;top:445px;width:1px;height:13px;background:#6d6d6d;"></div>
<div class="b" style="left:922px;top:445px;width:1px;height:13px;background:#6d6d6d;"></div>
<div class="b" style="left:1006px;top:445px;width:1px;height:13px;background:#6d6d6d;"></div>
<div class="b" style="left:1094px;top:445px;width:1px;height:13px;background:#6d6d6d;"></div>
<div class="b" style="left:1178px;top:441px;width:121px;height:16px;background:#fff;border-right:2px solid #000;border-bottom:2px solid #000;border-left:1px solid #000"></div>
<span class="t" style="left:1189.5px;top:442.8px;font-size:12px;line-height:16px;color:#000;letter-spacing:-0.58px;">EURUSD,H1 (visual)</span>
<svg class="b" style="left:1330px;top:444px" width="30" height="12"><path d="M8 2v8l-5-4zM22 2v8l5-4z" fill="#a0a0a0"/></svg>
<div class="b" style="left:0px;top:465px;width:1366px;height:236px;background:#f0f0f0;"></div>
<div class="b" style="left:1px;top:479px;width:13px;height:223px;background:#c8d6e7;"></div>
<div class="b" style="left:15px;top:679px;width:1px;height:22px;background:#a0a0a0;"></div>
<svg class="b" style="left:3px;top:466px" width="9" height="9"><path d="M1.500 2.500l5 4.500M6.500 2.500l-5 4.500" stroke="#000" stroke-width="1.900" fill="none"/></svg>
<span class="t" style="left:-11px;top:676px;width:40px;height:14px;line-height:14px;font-size:12px;transform:rotate(-90deg);text-align:center;color:#000">Tester</span>
<div class="b" style="left:15px;top:465px;width:1331px;height:214px;background:#fff;border-left:1px solid #a0a0a0;border-top:1px solid #a0a0a0;box-sizing:border-box"></div>
<div class="b" style="left:16px;top:466px;width:1330px;height:213px;overflow:hidden">
<div class="b" style="left:0;top:24px;width:1330px;height:19px;background:#ebebeb;border-bottom:1px solid #c8c8c8"></div>
<div class="b" style="left:0;top:44px;width:1330px;height:19px;background:#fff;border-bottom:1px solid #c8c8c8"></div>
<div class="b" style="left:0;top:64px;width:1330px;height:19px;background:#ebebeb;border-bottom:1px solid #c8c8c8"></div>
<div class="b" style="left:0;top:84px;width:1330px;height:19px;background:#fff;border-bottom:1px solid #c8c8c8"></div>
<div class="b" style="left:0;top:104px;width:1330px;height:19px;background:#ebebeb;border-bottom:1px solid #c8c8c8"></div>
<div class="b" style="left:0;top:124px;width:1330px;height:19px;background:#fff;border-bottom:1px solid #c8c8c8"></div>
<div class="b" style="left:0;top:144px;width:1330px;height:19px;background:#ebebeb;border-bottom:1px solid #c8c8c8"></div>
<div class="b" style="left:0;top:164px;width:1330px;height:19px;background:#fff;border-bottom:1px solid #c8c8c8"></div>
<div class="b" style="left:0;top:184px;width:1330px;height:19px;background:#ebebeb;border-bottom:1px solid #c8c8c8"></div>
<div class="b" style="left:0;top:204px;width:1330px;height:19px;background:#fff;border-bottom:1px solid #c8c8c8"></div>
<div class="b" style="left:0;top:24px;width:1330px;height:1px;background:#c8c8c8"></div>
<div class="b" style="left:87px;top:0;width:1px;height:213px;background:#d4d4d4"></div>
<div class="b" style="left:308px;top:0;width:1px;height:213px;background:#d4d4d4"></div>
<div class="b" style="left:407px;top:0;width:1px;height:213px;background:#d4d4d4"></div>
<div class="b" style="left:506px;top:0;width:1px;height:213px;background:#d4d4d4"></div>
<div class="b" style="left:593px;top:0;width:1px;height:213px;background:#d4d4d4"></div>
<div class="b" style="left:726px;top:0;width:1px;height:213px;background:#d4d4d4"></div>
<div class="b" style="left:858px;top:0;width:1px;height:213px;background:#d4d4d4"></div>
<div class="b" style="left:990px;top:0;width:1px;height:213px;background:#d4d4d4"></div>
<div class="b" style="left:1156px;top:0;width:1px;height:213px;background:#d4d4d4"></div>
<span class="t" style="left:6.0px;top:3.8px;font-size:12px;line-height:16px;color:#000;">#</span>
<span class="t" style="left:258.0px;top:3.8px;font-size:12px;line-height:16px;color:#000;letter-spacing:-0.38px;">Time</span>
<span class="t" style="left:376.0px;top:3.8px;font-size:12px;line-height:16px;color:#000;letter-spacing:-0.13px;">Type</span>
<span class="t" style="left:471.5px;top:3.8px;font-size:12px;line-height:16px;color:#000;letter-spacing:-0.24px;">Order</span>
<span class="t" style="left:567.0px;top:3.8px;font-size:12px;line-height:16px;color:#000;letter-spacing:-0.34px;">Size</span>
<span class="t" style="left:694.0px;top:3.8px;font-size:12px;line-height:16px;color:#000;letter-spacing:-0.07px;">Price</span>
<span class="t" style="left:827.0px;top:3.8px;font-size:12px;line-height:16px;color:#000;letter-spacing:0.06px;">S / L</span>
<span class="t" style="left:959.0px;top:3.8px;font-size:12px;line-height:16px;color:#000;letter-spacing:-0.02px;">T / P</span>
<span class="t" style="left:1122.5px;top:3.8px;font-size:12px;line-height:16px;color:#000;letter-spacing:0.08px;">Profit</span>
<span class="t" style="left:1282.0px;top:3.8px;font-size:12px;line-height:16px;color:#000;letter-spacing:-0.34px;">Balance</span>
<svg class="b" style="left:294px;top:7px" width="8" height="10"><path d="M2 8l4-6" stroke="#666" stroke-width="1" fill="none"/></svg>
<svg class="b" style="left:2px;top:26px" width="16" height="17" viewBox="0 0 16 17"><path d="M1.500 1.500h8l3 3v9h-11z" fill="#fff" stroke="#555" stroke-width="1"/><path d="M9.500 1.500v3h3" fill="none" stroke="#555"/><circle cx="11.500" cy="12.500" r="3" fill="#e8401c" stroke="#b02000" stroke-width="0.600"/></svg>
<span class="t" style="left:22.6px;top:25.8px;font-size:12px;line-height:16px;color:#000;">1</span>
<span class="t" style="left:220.9px;top:25.8px;font-size:12px;line-height:16px;color:#000;letter-spacing:-0.58px;">2021.03.09 16:00</span>
<span class="t" style="left:387.3px;top:25.8px;font-size:12px;line-height:16px;color:#000;letter-spacing:-0.45px;">sell</span>
<span class="t" style="left:495.3px;top:25.8px;font-size:12px;line-height:16px;color:#000;">1</span>
<span class="t" style="left:568.5px;top:25.8px;font-size:12px;line-height:16px;color:#000;letter-spacing:-0.58px;">0.01</span>
<span class="t" style="left:682.5px;top:25.8px;font-size:12px;line-height:16px;color:#000;letter-spacing:-0.62px;">1.18920</span>
<span class="t" style="left:815.5px;top:25.8px;font-size:12px;line-height:16px;color:#000;letter-spacing:-0.62px;">1.20846</span>
<span class="t" style="left:947.5px;top:25.8px;font-size:12px;line-height:16px;color:#000;letter-spacing:-0.62px;">1.17920</span>
<svg class="b" style="left:2px;top:46px" width="16" height="17" viewBox="0 0 16 17"><path d="M1.500 1.500h8l3 3v9h-11z" fill="#fff" stroke="#555" stroke-width="1"/><path d="M9.500 1.500v3h3" fill="none" stroke="#555"/><circle cx="11.500" cy="12.500" r="3" fill="#e8401c" stroke="#b02000" stroke-width="0.600"/></svg>
<span class="t" style="left:22.6px;top:45.8px;font-size:12px;line-height:16px;color:#000;">2</span>
<span class="t" style="left:220.9px;top:45.8px;font-size:12px;line-height:16px;color:#000;letter-spacing:-0.58px;">2021.03.10 06:00</span>
<span class="t" style="left:371.7px;top:45.8px;font-size:12px;line-height:16px;color:#000;letter-spacing:-0.59px;">modify</span>
<span class="t" style="left:495.3px;top:45.8px;font-size:12px;line-height:16px;color:#000;">1</span>
<span class="t" style="left:568.5px;top:45.8px;font-size:12px;line-height:16px;color:#000;letter-spacing:-0.58px;">0.01</span>
<span class="t" style="left:682.5px;top:45.8px;font-size:12px;line-height:16px;color:#000;letter-spacing:-0.62px;">1.18920</span>
<span class="t" style="left:815.5px;top:45.8px;font-size:12px;line-height:16px;color:#000;letter-spacing:-0.62px;">1.18832</span>
<span class="t" style="left:947.5px;top:45.8px;font-size:12px;line-height:16px;color:#000;letter-spacing:-0.62px;">1.17920</span>
<svg class="b" style="left:2px;top:66px" width="16" height="16" viewBox="0 0 16 16"><rect x="1.500" y="1.500" width="11" height="12" rx="1" fill="#fff" stroke="#777"/><path d="M7 4.500l3.500 3.500h-2v3h-3v-3h-2z" fill="#1a9a1a"/></svg>
<span class="t" style="left:22.6px;top:65.8px;font-size:12px;line-height:16px;color:#000;">3</span>
<span class="t" style="left:220.9px;top:65.8px;font-size:12px;line-height:16px;color:#000;letter-spacing:-0.58px;">2021.03.10 09:31</span>
<span class="t" style="left:392.7px;top:65.8px;font-size:12px;line-height:16px;color:#000;letter-spacing:-0.40px;">s/l</span>
<span class="t" style="left:495.3px;top:65.8px;font-size:12px;line-height:16px;color:#000;">1</span>
<span class="t" style="left:568.5px;top:65.8px;font-size:12px;line-height:16px;color:#000;letter-spacing:-0.58px;">0.01</span>
<span class="t" style="left:682.5px;top:65.8px;font-size:12px;line-height:16px;color:#000;letter-spacing:-0.62px;">1.18832</span>
<span class="t" style="left:815.5px;top:65.8px;font-size:12px;line-height:16px;color:#000;letter-spacing:-0.62px;">1.18832</span>
<span class="t" style="left:947.5px;top:65.8px;font-size:12px;line-height:16px;color:#000;letter-spacing:-0.62px;">1.17920</span>
<span class="t" style="left:1131.5px;top:65.8px;font-size:12px;line-height:16px;color:#000;letter-spacing:-0.58px;">0.80</span>
<span class="t" style="left:1286.5px;top:65.8px;font-size:12px;line-height:16px;color:#000;letter-spacing:-0.62px;">7500.80</span>
<svg class="b" style="left:2px;top:86px" width="16" height="17" viewBox="0 0 16 17"><path d="M1.500 1.500h8l3 3v9h-11z" fill="#fff" stroke="#555" stroke-width="1"/><path d="M9.500 1.500v3h3" fill="none" stroke="#555"/><circle cx="11.500" cy="12.500" r="3" fill="#e8401c" stroke="#b02000" stroke-width="0.600"/></svg>
<span class="t" style="left:22.6px;top:85.8px;font-size:12px;line-height:16px;color:#000;">4</span>
<span class="t" style="left:220.9px;top:85.8px;font-size:12px;line-height:16px;color:#000;letter-spacing:-0.58px;">2021.03.22 01:00</span>
<span class="t" style="left:387.3px;top:85.8px;font-size:12px;line-height:16px;color:#000;letter-spacing:-0.45px;">sell</span>
<span class="t" style="left:495.3px;top:85.8px;font-size:12px;line-height:16px;color:#000;">2</span>
<span class="t" style="left:568.5px;top:85.8px;font-size:12px;line-height:16px;color:#000;letter-spacing:-0.58px;">0.01</span>
<span class="t" style="left:682.5px;top:85.8px;font-size:12px;line-height:16px;color:#000;letter-spacing:-0.62px;">1.18808</span>
<span class="t" style="left:815.5px;top:85.8px;font-size:12px;line-height:16px;color:#000;letter-spacing:-0.62px;">1.18810</span>
<span class="t" style="left:947.5px;top:85.8px;font-size:12px;line-height:16px;color:#000;letter-spacing:-0.62px;">1.17808</span>
<svg class="b" style="left:2px;top:106px" width="16" height="16" viewBox="0 0 16 16"><rect x="1.500" y="1.500" width="11" height="12" rx="1" fill="#fff" stroke="#777"/><path d="M7 11l3.500-3.500h-2v-3h-3v3h-2z" fill="#d63a1a"/></svg>
<span class="t" style="left:22.6px;top:105.8px;font-size:12px;line-height:16px;color:#000;">5</span>
<span class="t" style="left:220.9px;top:105.8px;font-size:12px;line-height:16px;color:#000;letter-spacing:-0.58px;">2021.03.22 01:01</span>
<span class="t" style="left:392.7px;top:105.8px;font-size:12px;line-height:16px;color:#000;letter-spacing:-0.40px;">s/l</span>
<span class="t" style="left:495.3px;top:105.8px;font-size:12px;line-height:16px;color:#000;">2</span>
<span class="t" style="left:568.5px;top:105.8px;font-size:12px;line-height:16px;color:#000;letter-spacing:-0.58px;">0.01</span>
<span class="t" style="left:682.5px;top:105.8px;font-size:12px;line-height:16px;color:#000;letter-spacing:-0.62px;">1.18810</span>
<span class="t" style="left:815.5px;top:105.8px;font-size:12px;line-height:16px;color:#000;letter-spacing:-0.62px;">1.18810</span>
<span class="t" style="left:947.5px;top:105.8px;font-size:12px;line-height:16px;color:#000;letter-spacing:-0.62px;">1.17808</span>
<span class="t" style="left:1127.9px;top:105.8px;font-size:12px;line-height:16px;color:#000;letter-spacing:-0.55px;">-0.09</span>
<span class="t" style="left:1286.5px;top:105.8px;font-size:12px;line-height:16px;color:#000;letter-spacing:-0.62px;">7500.71</span>
<svg class="b" style="left:2px;top:126px" width="16" height="17" viewBox="0 0 16 17"><path d="M1.500 1.500h8l3 3v9h-11z" fill="#fff" stroke="#555" stroke-width="1"/><path d="M9.500 1.500v3h3" fill="none" stroke="#555"/><circle cx="11.500" cy="12.500" r="3" fill="#e8401c" stroke="#b02000" stroke-width="0.600"/></svg>
<span class="t" style="left:22.6px;top:125.8px;font-size:12px;line-height:16px;color:#000;">6</span>
<span class="t" style="left:220.9px;top:125.8px;font-size:12px;line-height:16px;color:#000;letter-spacing:-0.58px;">2021.03.26 10:00</span>
<span class="t" style="left:387.3px;top:125.8px;font-size:12px;line-height:16px;color:#000;letter-spacing:-0.45px;">sell</span>
<span class="t" style="left:495.3px;top:125.8px;font-size:12px;line-height:16px;color:#000;">3</span>
<span class="t" style="left:568.5px;top:125.8px;font-size:12px;line-height:16px;color:#000;letter-spacing:-0.58px;">0.01</span>
<span class="t" style="left:682.5px;top:125.8px;font-size:12px;line-height:16px;color:#000;letter-spacing:-0.62px;">1.17832</span>
<span class="t" style="left:815.5px;top:125.8px;font-size:12px;line-height:16px;color:#000;letter-spacing:-0.62px;">1.19319</span>
<span class="t" style="left:947.5px;top:125.8px;font-size:12px;line-height:16px;color:#000;letter-spacing:-0.62px;">1.16832</span>
<svg class="b" style="left:2px;top:146px" width="16" height="17" viewBox="0 0 16 17"><path d="M1.500 1.500h8l3 3v9h-11z" fill="#fff" stroke="#555" stroke-width="1"/><path d="M9.500 1.500v3h3" fill="none" stroke="#555"/><circle cx="11.500" cy="12.500" r="3" fill="#e8401c" stroke="#b02000" stroke-width="0.600"/></svg>
<span class="t" style="left:22.6px;top:145.8px;font-size:12px;line-height:16px;color:#000;">7</span>
<span class="t" style="left:220.9px;top:145.8px;font-size:12px;line-height:16px;color:#000;letter-spacing:-0.58px;">2021.03.26 14:00</span>
<span class="t" style="left:387.3px;top:145.8px;font-size:12px;line-height:16px;color:#000;letter-spacing:-0.45px;">sell</span>
<span class="t" style="left:495.3px;top:145.8px;font-size:12px;line-height:16px;color:#000;">4</span>
<span class="t" style="left:568.5px;top:145.8px;font-size:12px;line-height:16px;color:#000;letter-spacing:-0.58px;">0.01</span>
<span class="t" style="left:682.5px;top:145.8px;font-size:12px;line-height:16px;color:#000;letter-spacing:-0.62px;">1.17821</span>
<span class="t" style="left:815.5px;top:145.8px;font-size:12px;line-height:16px;color:#000;letter-spacing:-0.62px;">1.19319</span>
<span class="t" style="left:947.5px;top:145.8px;font-size:12px;line-height:16px;color:#000;letter-spacing:-0.62px;">1.16821</span>
<svg class="b" style="left:2px;top:166px" width="16" height="17" viewBox="0 0 16 17"><path d="M1.500 1.500h8l3 3v9h-11z" fill="#fff" stroke="#555" stroke-width="1"/><path d="M9.500 1.500v3h3" fill="none" stroke="#555"/><circle cx="11.500" cy="12.500" r="3" fill="#e8401c" stroke="#b02000" stroke-width="0.600"/></svg>
<span class="t" style="left:22.6px;top:165.8px;font-size:12px;line-height:16px;color:#000;">8</span>
<span class="t" style="left:220.9px;top:165.8px;font-size:12px;line-height:16px;color:#000;letter-spacing:-0.58px;">2021.03.26 15:00</span>
<span class="t" style="left:371.7px;top:165.8px;font-size:12px;line-height:16px;color:#000;letter-spacing:-0.59px;">modify</span>
<span class="t" style="left:495.3px;top:165.8px;font-size:12px;line-height:16px;color:#000;">3</span>
<span class="t" style="left:568.5px;top:165.8px;font-size:12px;line-height:16px;color:#000;letter-spacing:-0.58px;">0.01</span>
<span class="t" style="left:682.5px;top:165.8px;font-size:12px;line-height:16px;color:#000;letter-spacing:-0.62px;">1.17832</span>
<span class="t" style="left:815.5px;top:165.8px;font-size:12px;line-height:16px;color:#000;letter-spacing:-0.62px;">1.17828</span>
<span class="t" style="left:947.5px;top:165.8px;font-size:12px;line-height:16px;color:#000;letter-spacing:-0.62px;">1.16832</span>
<svg class="b" style="left:2px;top:186px" width="16" height="17" viewBox="0 0 16 17"><path d="M1.500 1.500h8l3 3v9h-11z" fill="#fff" stroke="#555" stroke-width="1"/><path d="M9.500 1.500v3h3" fill="none" stroke="#555"/><circle cx="11.500" cy="12.500" r="3" fill="#e8401c" stroke="#b02000" stroke-width="0.600"/></svg>
<span class="t" style="left:22.6px;top:185.8px;font-size:12px;line-height:16px;color:#000;">9</span>
<span class="t" style="left:220.9px;top:185.8px;font-size:12px;line-height:16px;color:#000;letter-spacing:-0.58px;">2021.03.26 15:00</span>
<span class="t" style="left:371.7px;top:185.8px;font-size:12px;line-height:16px;color:#000;letter-spacing:-0.59px;">modify</span>
<span class="t" style="left:495.3px;top:185.8px;font-size:12px;line-height:16px;color:#000;">4</span>
<span class="t" style="left:568.5px;top:185.8px;font-size:12px;line-height:16px;color:#000;letter-spacing:-0.58px;">0.01</span>
<span class="t" style="left:682.5px;top:185.8px;font-size:12px;line-height:16px;color:#000;letter-spacing:-0.62px;">1.17821</span>
<span class="t" style="left:815.5px;top:185.8px;font-size:12px;line-height:16px;color:#000;letter-spacing:-0.62px;">1.17828</span>
<span class="t" style="left:947.5px;top:185.8px;font-size:12px;line-height:16px;color:#000;letter-spacing:-0.62px;">1.16821</span>
<svg class="b" style="left:2px;top:206px" width="16" height="16" viewBox="0 0 16 16"><rect x="1.500" y="1.500" width="11" height="12" rx="1" fill="#fff" stroke="#777"/><path d="M7 11l3.500-3.500h-2v-3h-3v3h-2z" fill="#d63a1a"/></svg>
<span class="t" style="left:22.6px;top:205.8px;font-size:12px;line-height:16px;color:#000;letter-spacing:-0.60px;">10</span>
<span class="t" style="left:220.9px;top:205.8px;font-size:12px;line-height:16px;color:#000;letter-spacing:-0.58px;">2021.03.26 15:22</span>
<span class="t" style="left:392.7px;top:205.8px;font-size:12px;line-height:16px;color:#000;letter-spacing:-0.40px;">s/l</span>
<span class="t" style="left:495.3px;top:205.8px;font-size:12px;line-height:16px;color:#000;">3</span>
<span class="t" style="left:568.5px;top:205.8px;font-size:12px;line-height:16px;color:#000;letter-spacing:-0.58px;">0.01</span>
<span class="t" style="left:682.5px;top:205.8px;font-size:12px;line-height:16px;color:#000;letter-spacing:-0.62px;">1.17828</span>
<span class="t" style="left:815.5px;top:205.8px;font-size:12px;line-height:16px;color:#000;letter-spacing:-0.62px;">1.17828</span>
<span class="t" style="left:947.5px;top:205.8px;font-size:12px;line-height:16px;color:#000;letter-spacing:-0.62px;">1.16832</span>
<span class="t" style="left:1127.9px;top:205.8px;font-size:12px;line-height:16px;color:#000;letter-spacing:-0.55px;">-0.02</span>
<span class="t" style="left:1286.5px;top:205.8px;font-size:12px;line-height:16px;color:#000;letter-spacing:-0.62px;">7500.69</span>
</div>
<div class="b" style="left:1346px;top:466px;width:17px;height:213px;background:#f0f0f0;"></div>
<div class="b" style="left:1346px;top:483px;width:15px;height:145px;background:#cdcdcd;"></div>
<svg class="b" style="left:1346px;top:466px" width="17" height="213"><path d="M5 11.500l3.500-3.500 3.500 3.500M5 202.500l3.500 3.500 3.500-3.500" stroke="#505050" stroke-width="2" fill="none"/></svg>
<div class="b" style="left:15px;top:679px;width:1347px;height:1px;background:#000;"></div>
<span class="t" style="left:28.0px;top:680.8px;font-size:12px;line-height:16px;color:#6d6d6d;letter-spacing:-0.17px;">Settings</span>
<span class="t" style="left:147.0px;top:680.8px;font-size:12px;line-height:16px;color:#6d6d6d;letter-spacing:-0.47px;">Graph</span>
<span class="t" style="left:199.0px;top:680.8px;font-size:12px;line-height:16px;color:#6d6d6d;letter-spacing:-0.24px;">Report</span>
<span class="t" style="left:254.0px;top:680.8px;font-size:12px;line-height:16px;color:#6d6d6d;letter-spacing:-0.24px;">Journal</span>
<div class="b" style="left:189px;top:682px;width:1px;height:14px;background:#6d6d6d;"></div>
<div class="b" style="left:244px;top:682px;width:1px;height:14px;background:#6d6d6d;"></div>
<div class="b" style="left:302px;top:682px;width:1px;height:14px;background:#6d6d6d;"></div>
<div class="b" style="left:80px;top:679px;width:55px;height:18px;background:#fff;border-left:1px solid #000;border-right:2px solid #000;border-bottom:2px solid #000"></div>
<span class="t" style="left:90.6px;top:680.8px;font-size:12px;line-height:16px;color:#000;letter-spacing:-0.57px;">Results</span>
<div class="b" style="left:0px;top:701px;width:1364px;height:1px;background:#fff;"></div>
<div class="b" style="left:1363px;top:465px;width:1px;height:237px;background:#fff;"></div>
<div class="b" style="left:0px;top:702px;width:1366px;height:2px;background:#f0f0f0;"></div>
<div class="b" style="left:0px;top:704px;width:1366px;height:1px;background:#a0a0a0;"></div>
<div class="b" style="left:0px;top:705px;width:1366px;height:1px;background:#fff;"></div>
<div class="b" style="left:0px;top:706px;width:1366px;height:22px;background:#f0f0f0;"></div>
<div class="b" style="left:671px;top:708px;width:1px;height:18px;background:#c0c0c0;"></div>
<div class="b" style="left:788px;top:708px;width:1px;height:18px;background:#c0c0c0;"></div>
<div class="b" style="left:890px;top:708px;width:1px;height:18px;background:#c0c0c0;"></div>
<div class="b" style="left:961px;top:708px;width:1px;height:18px;background:#c0c0c0;"></div>
<div class="b" style="left:1032px;top:708px;width:1px;height:18px;background:#c0c0c0;"></div>
<div class="b" style="left:1100px;top:708px;width:1px;height:18px;background:#c0c0c0;"></div>
<div class="b" style="left:1170px;top:708px;width:1px;height:18px;background:#c0c0c0;"></div>
<div class="b" style="left:1236px;top:708px;width:1px;height:18px;background:#c0c0c0;"></div>
<span class="t" style="left:2.5px;top:709.8px;font-size:12px;line-height:16px;color:#000;letter-spacing:-0.44px;">For Help, press F1</span>
<span class="t" style="left:678.6px;top:709.8px;font-size:12px;line-height:16px;color:#000;letter-spacing:-0.12px;">Default</span>
<span class="t" style="left:794.4px;top:709.8px;font-size:12px;line-height:16px;color:#000;letter-spacing:-0.61px;">2021.03.23 23:00</span>
<span class="t" style="left:896.7px;top:709.8px;font-size:12px;line-height:16px;color:#000;letter-spacing:-0.57px;">O: 1.18478</span>
<span class="t" style="left:967.5px;top:709.8px;font-size:12px;line-height:16px;color:#000;letter-spacing:-0.55px;">H: 1.18508</span>
<span class="t" style="left:1038.3px;top:709.8px;font-size:12px;line-height:16px;color:#000;letter-spacing:-0.60px;">L: 1.18422</span>
<span class="t" style="left:1106.5px;top:709.8px;font-size:12px;line-height:16px;color:#000;letter-spacing:-0.65px;">C: 1.18501</span>
<span class="t" style="left:1175.8px;top:709.8px;font-size:12px;line-height:16px;color:#000;letter-spacing:-0.53px;">V: 1732</span>
<span class="t" style="left:1269.8px;top:709.8px;font-size:12px;line-height:16px;color:#000;letter-spacing:-0.28px;">6496/9 kb</span>
<svg class="b" style="left:1241px;top:711px" width="24" height="13"><rect x="0.0" y="0" width="1.600" height="12" fill="#4a7a1e"/><rect x="2.6" y="1" width="1.600" height="11" fill="#4a7a1e"/><rect x="5.2" y="0" width="1.600" height="10" fill="#4a7a1e"/><rect x="7.8" y="1" width="1.600" height="12" fill="#4a7a1e"/><rect x="10.4" y="0" width="1.600" height="11" fill="#4a7a1e"/><rect x="13.0" y="1" width="1.600" height="10" fill="#4a7a1e"/><rect x="15.6" y="0" width="1.600" height="12" fill="#4a7a1e"/><rect x="18.2" y="1" width="1.600" height="11" fill="#4a7a1e"/><rect x="20.8" y="0" width="1.600" height="10" fill="#4a7a1e"/></svg>
<div class="b" style="left:0px;top:728px;width:1366px;height:40px;background:linear-gradient(90deg,#1f343b 0%,#1f333c 35%,#1e303f 58%,#1b2c44 80%,#18284a 100%);"></div>
<div class="b" style="left:454px;top:728px;width:160px;height:40px;background:#3e515a;"></div>
<div class="b" style="left:297px;top:766px;width:152px;height:2px;background:#76b9ed;"></div>
<div class="b" style="left:454px;top:766px;width:160px;height:2px;background:#76b9ed;"></div>
<div class="b" style="left:619px;top:766px;width:152px;height:2px;background:#76b9ed;"></div>
<svg class="b" style="left:16px;top:740px" width="16" height="16" viewBox="0 0 16 16"><path d="M0 2.300l6.500-0.900v6.300h-6.500zM7.300 1.300l8.700-1.300v7.700h-8.700zM0 8.500h6.500v6.300l-6.500-0.900zM7.300 8.500h8.700v7.500l-8.700-1.200z" fill="#fff"/></svg>
<svg class="b" style="left:63px;top:739px" width="18" height="18" viewBox="0 0 18 18"><circle cx="11" cy="7" r="5.300" fill="none" stroke="#fff" stroke-width="1.500"/><path d="M7.300 10.700l-6 6" stroke="#fff" stroke-width="1.500"/></svg>
<svg class="b" style="left:110px;top:739px" width="19" height="19" viewBox="0 0 19 19"><circle cx="9.500" cy="9.500" r="7" fill="none" stroke="#fff" stroke-width="2"/></svg>
<svg class="b" style="left:159px;top:740px" width="18" height="16" viewBox="0 0 18 16"><rect x="1.500" y="3.500" width="10" height="9" fill="none" stroke="#fff" stroke-width="1.300"/><path d="M1 1h11M1 15h11" stroke="#fff" stroke-width="1.300"/><path d="M15 1v3M15 6v5M15 13v3" stroke="#fff" stroke-width="1.600"/></svg>
<svg class="b" style="left:206px;top:735px" width="25" height="26" viewBox="0 0 25 26"><path d="M8 8v-3a4.500 4.500 0 0 1 9 0v3" fill="none" stroke="#e8e8e8" stroke-width="1.600"/><path d="M1 8h23v16h-23z" fill="#f2f2f2"/><rect x="7.500" y="11.500" width="4.500" height="4.500" fill="#f25022"/><rect x="13" y="11.500" width="4.500" height="4.500" fill="#7fba00"/><rect x="7.500" y="17" width="4.500" height="4.500" fill="#00a4ef"/><rect x="13" y="17" width="4.500" height="4.500" fill="#ffb900"/></svg>
<svg class="b" style="left:255px;top:736px" width="25" height="24" viewBox="0 0 25 24"><path d="M0.500 9l12-8.500 12 8.500v14h-24z" fill="#1479d4"/><path d="M0.500 9l12 8 12-8v14h-24z" fill="#35b7f3"/><path d="M0.500 9l12 8 12-8" fill="#fff"/><path d="M0.500 9l12 8 12-8 0 2-12 8-12-8z" fill="#1f8ee0" opacity="0.300"/></svg>
<svg class="b" style="left:303px;top:736px" width="24" height="24" viewBox="0 0 24 24"><circle cx="12" cy="12" r="11.500" fill="#db4437"/><path d="M12 12L2.100 6.200A11.500 11.500 0 0 0 7.400 22.500z" fill="#0f9d58"/><path d="M12 12l-4.600 10.500A11.500 11.500 0 0 0 23.400 10.500z" fill="#ffcd40"/><path d="M12 12L23.400 10.500A11.500 11.500 0 0 0 2.100 6.200z" fill="#db4437"/><circle cx="12" cy="12" r="5.200" fill="#fff"/><circle cx="12" cy="12" r="4.100" fill="#4285f4"/></svg>
<span class="t" dir="ltr" style="left:331px;top:739px;width:110px;text-align:right;font-size:11.5px;line-height:18px;color:#fff;font-family:'DejaVu Sans',sans-serif;letter-spacing:0">طلب تحويل استراتيج...</span>
<svg class="b" style="left:464px;top:736px" width="25" height="24" viewBox="0 0 25 24"><rect width="25" height="24" fill="#000"/><path d="M2 17.500c5-0.500 9-1 13-3.500" stroke="#fff" stroke-width="1.600" fill="none"/><path d="M4 15v-1.500M6.500 14.500v-2.500M9 14v-3.500M11.500 13v-4.500" stroke="#ddd" stroke-width="1.300"/></svg>
<span class="t" style="left:476.0px;top:737.7px;font-size:11px;line-height:14px;color:#8cc63f;letter-spacing:0.25px;font-weight:bold;">IC</span>
<span class="t" style="left:492.3px;top:740.0px;font-size:12px;line-height:16px;color:#fff;letter-spacing:-0.34px;">11598239: ICMarket...</span>
<svg class="b" style="left:626px;top:736px" width="24" height="27" viewBox="0 0 24 27"><circle cx="11.500" cy="12" r="11" fill="#2da5e0"/><path d="M5 11.800l12-4.800-2 10.500-3.500-2.700-1.800 1.800-0.300-3 5.500-5-7 4.300z" fill="#fff"/><rect x="8" y="16.500" width="16.500" height="9" rx="1.500" fill="#e81123"/></svg>
<span class="t" style="left:635.0px;top:752.5px;font-size:8px;line-height:10px;color:#fff;letter-spacing:0.79px;">.96</span>
<span class="t" style="left:654.0px;top:740.0px;font-size:12px;line-height:16px;color:#fff;letter-spacing:-0.41px;">Telegram (663496)</span>
<svg class="b" style="left:1098px;top:742px" width="13" height="12" viewBox="0 0 13 12"><path d="M1.500 8.500l5-5 5 5" stroke="#fff" stroke-width="1.300" fill="none"/></svg>
<svg class="b" style="left:1121px;top:739px" width="16" height="18" viewBox="0 0 16 18"><rect x="2.500" y="3.500" width="8" height="10" rx="2.500" fill="none" stroke="#fff" stroke-width="1.200"/><circle cx="6.500" cy="8" r="1.600" fill="none" stroke="#fff"/><path d="M11 7l3-1.500v6l-3-1.500M4 1.500h5M4 16h5" stroke="#fff" stroke-width="1.100" fill="none"/></svg>
<svg class="b" style="left:1145px;top:742px" width="17" height="12" viewBox="0 0 17 12"><rect x="0.500" y="1.500" width="13" height="8" fill="none" stroke="#fff" stroke-width="1.100"/><rect x="14" y="4" width="1.600" height="3" fill="#fff"/><rect x="2" y="3" width="2" height="5" fill="#fff"/></svg>
<svg class="b" style="left:1169px;top:740px" width="18" height="16" viewBox="0 0 18 16"><path d="M2 14a12 12 0 0 1 12-12" stroke="#fff" stroke-width="1.200" fill="none"/><path d="M5.500 14a8.500 8.500 0 0 1 8.500-8.500" stroke="#fff" stroke-width="1.200" fill="none"/><path d="M9 14a5 5 0 0 1 5-5" stroke="#fff" stroke-width="1.200" fill="none"/><path d="M14 10.500v3.500h-3.500" stroke="#fff" stroke-width="1.200" fill="none"/></svg>
<svg class="b" style="left:1192px;top:741px" width="20" height="14" viewBox="0 0 20 14"><path d="M1 5h3l4-3.500v11l-4-3.500h-3z" fill="none" stroke="#fff" stroke-width="1.100"/><path d="M11.500 4.500l5 5M16.500 4.500l-5 5" stroke="#fff" stroke-width="1.100"/></svg>
<span class="t" style="left:1219.7px;top:739.8px;font-size:12px;line-height:16px;color:#fff;letter-spacing:-1.10px;">ENG</span>
<span class="t" style="left:1260.5px;top:731.3px;font-size:12px;line-height:16px;color:#fff;letter-spacing:-0.38px;">6:48 PM</span>
<span class="t" style="left:1254.3px;top:749.3px;font-size:12px;line-height:16px;color:#fff;letter-spacing:-0.08px;">4/28/2021</span>
<svg class="b" style="left:1324px;top:738px" width="26" height="26" viewBox="0 0 26 26"><path d="M1 2h16v12h-9.500l-3.500 3.500v-3.500h-3z" fill="#fff"/><path d="M4 5.500h10M4 8h10M4 10.500h10" stroke="#1b2c44" stroke-width="1"/><circle cx="16.700" cy="17.200" r="7.700" fill="#2b2b2b" stroke="#8a8a8a" stroke-width="1"/></svg>
<span class="t" style="left:1336.8px;top:748.0px;font-size:11px;line-height:14px;color:#fff;letter-spacing:-1.31px;font-weight:bold;">11</span>
<div class="b" style="left:1361px;top:728px;width:1px;height:40px;background:#8a93a5;"></div>
</body></html>
